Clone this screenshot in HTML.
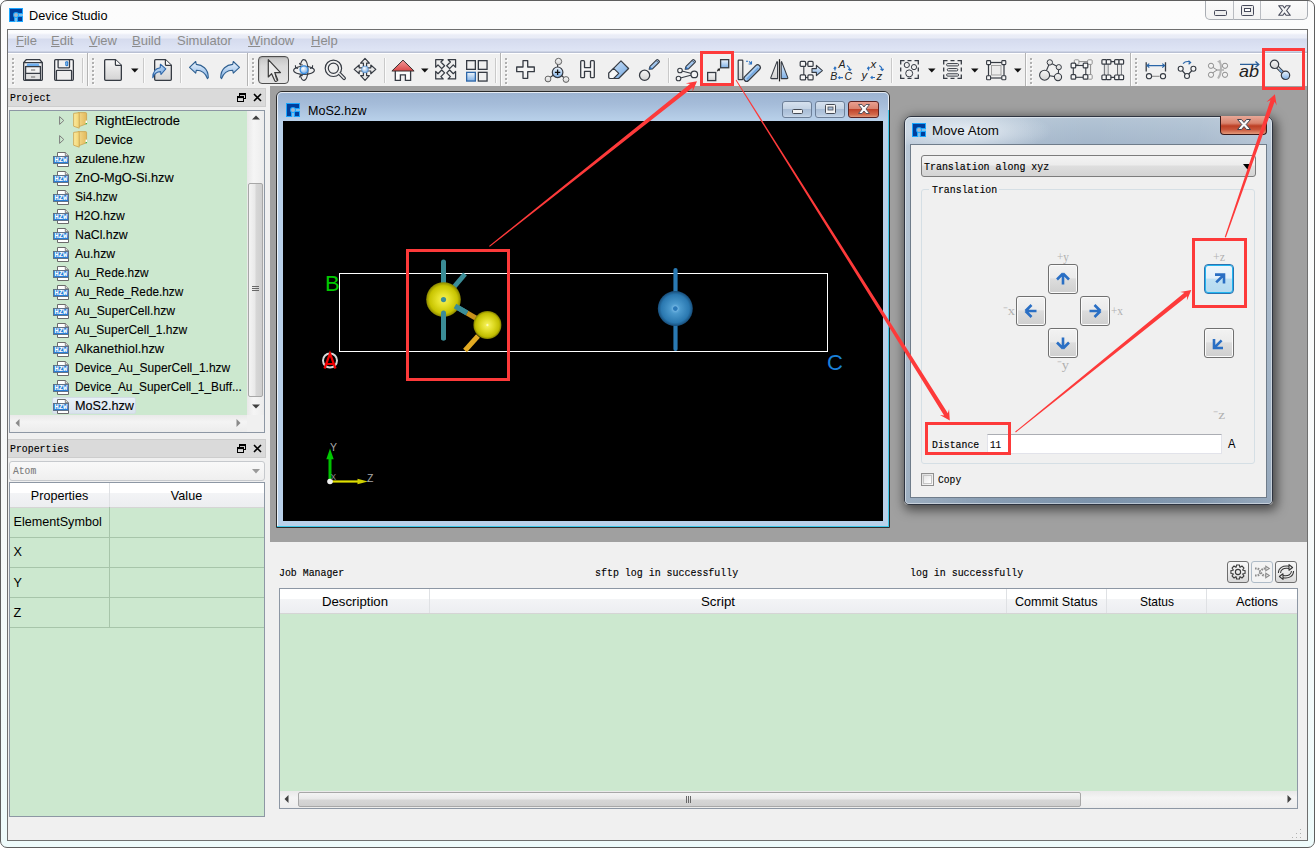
<!DOCTYPE html>
<html><head><meta charset="utf-8">
<style>
*{box-sizing:border-box;margin:0;padding:0}
html,body{width:1315px;height:848px;overflow:hidden;background:#fff}
body{position:relative;font-family:"Liberation Sans",sans-serif;font-size:13px;color:#000}
.a{position:absolute}
.t{white-space:pre}
svg{position:absolute;overflow:visible}
</style></head><body>
<div class="a" style="left:0px;top:0px;width:1315px;height:848px;border:1px solid #5e5e5e;border-radius:7px;background:linear-gradient(#fcfcfc,#f7f9f9 60%,#eefbfb)"></div>
<svg style="left:9px;top:8px;" width="14" height="14" viewBox="0 0 14 14"><rect x="0" y="0" width="14" height="14" fill="#1aa6ff"/><rect x="1" y="1" width="12" height="12" fill="#003f9c"/><rect x="7" y="5" width="7" height="4" fill="#1aa6ff"/><rect x="5" y="7" width="4" height="7" fill="#1aa6ff"/><rect x="8" y="6" width="6" height="2" fill="#80c0ea"/><rect x="6" y="8" width="2" height="6" fill="#80c0ea"/><circle cx="7" cy="7" r="3" fill="#1aa6ff"/><circle cx="7" cy="7" r="2" fill="#a6b8cc"/></svg>
<svg style="left:29.00px;top:4.30px" width="82.5" height="20.8"><text x="0" y="15.60" font-family="Liberation Sans" font-size="13" font-weight="normal" fill="#000" textLength="78.5" lengthAdjust="spacingAndGlyphs" style="white-space:pre">Device Studio</text></svg>
<div class="a" style="left:1205px;top:1px;width:103px;height:19px;border:1px solid #a9adb3;border-top:none;border-radius:0 0 5px 5px;background:linear-gradient(#fbfbfb,#f3f3f3)"></div>
<div class="a" style="left:1233px;top:1px;width:1px;height:19px;background:#b9bcc1"></div>
<div class="a" style="left:1260px;top:1px;width:1px;height:19px;background:#b9bcc1"></div>
<svg style="left:1214px;top:10px;" width="13" height="6" viewBox="0 0 13 6"><rect x="0.5" y="0.5" width="12" height="5" rx="1" fill="#eee" stroke="#474a5a"/></svg>
<svg style="left:1241px;top:5px;" width="13" height="11" viewBox="0 0 13 11"><rect x="0.5" y="0.5" width="12" height="10" rx="1" fill="#eee" stroke="#474a5a"/><rect x="3.5" y="3.5" width="6" height="3" fill="#fff" stroke="#474a5a"/></svg>
<svg style="left:1278px;top:5px;" width="13" height="11" viewBox="0 0 13 11"><path d="M0.7 0.7 H4.9 L6.5 3 L8.1 0.7 H12.3 L8.6 5.5 L12.3 10.3 H8.1 L6.5 8 L4.9 10.3 H0.7 L4.4 5.5 Z" fill="#f4f4f4" stroke="#474a5a" stroke-width="1.1" stroke-linejoin="round"/></svg>
<div class="a" style="left:7px;top:29px;width:1301px;height:812px;border:1px solid #6f6f6f;background:#f0f0f0"></div>
<div class="a" style="left:8px;top:30px;width:1299px;height:23px;background:linear-gradient(#fcfdfe 0px,#fbfcfe 3px,#eaedf7 5px,#e9ecf6 8px,#d5dbee 9px,#dfe5f5 21px,#b9c0d3 22px)"></div>
<div class="a" style="left:8px;top:53px;width:1299px;height:1px;background:#fff"></div>
<div class="a t" style="left:16px;top:32.00px;line-height:17px;font-family:'Liberation Sans';font-size:13px;color:#8c8c8c;"><u>F</u>ile</div>
<div class="a t" style="left:51px;top:32.00px;line-height:17px;font-family:'Liberation Sans';font-size:13px;color:#8c8c8c;"><u>E</u>dit</div>
<div class="a t" style="left:89px;top:32.00px;line-height:17px;font-family:'Liberation Sans';font-size:13px;color:#8c8c8c;"><u>V</u>iew</div>
<div class="a t" style="left:132px;top:32.00px;line-height:17px;font-family:'Liberation Sans';font-size:13px;color:#8c8c8c;"><u>B</u>uild</div>
<div class="a t" style="left:177px;top:32.00px;line-height:17px;font-family:'Liberation Sans';font-size:13px;color:#8c8c8c;">Simulator</div>
<div class="a t" style="left:248px;top:32.00px;line-height:17px;font-family:'Liberation Sans';font-size:13px;color:#8c8c8c;"><u>W</u>indow</div>
<div class="a t" style="left:311px;top:32.00px;line-height:17px;font-family:'Liberation Sans';font-size:13px;color:#8c8c8c;"><u>H</u>elp</div>
<div class="a" style="left:8px;top:54px;width:1299px;height:32px;background:#f0f0f0"></div>
<div class="a" style="left:8px;top:86px;width:262px;height:2px;background:#f0f0f0"></div>
<div class="a" style="left:87px;top:53px;width:1px;height:33px;background:#b4b4b4"></div>
<div class="a" style="left:88px;top:53px;width:1px;height:33px;background:#fdfdfd"></div>
<div class="a" style="left:247px;top:53px;width:1px;height:33px;background:#b4b4b4"></div>
<div class="a" style="left:248px;top:53px;width:1px;height:33px;background:#fdfdfd"></div>
<div class="a" style="left:500px;top:53px;width:1px;height:33px;background:#b4b4b4"></div>
<div class="a" style="left:501px;top:53px;width:1px;height:33px;background:#fdfdfd"></div>
<div class="a" style="left:1025px;top:53px;width:1px;height:33px;background:#b4b4b4"></div>
<div class="a" style="left:1026px;top:53px;width:1px;height:33px;background:#fdfdfd"></div>
<div class="a" style="left:1130px;top:53px;width:1px;height:33px;background:#b4b4b4"></div>
<div class="a" style="left:1131px;top:53px;width:1px;height:33px;background:#fdfdfd"></div>
<div class="a" style="left:12px;top:57.5px;width:2px;height:2px;background:#9a9a9a;border-radius:1px;box-shadow:1px 1px 0 #ffffff"></div>
<div class="a" style="left:12px;top:61.5px;width:2px;height:2px;background:#9a9a9a;border-radius:1px;box-shadow:1px 1px 0 #ffffff"></div>
<div class="a" style="left:12px;top:65.5px;width:2px;height:2px;background:#9a9a9a;border-radius:1px;box-shadow:1px 1px 0 #ffffff"></div>
<div class="a" style="left:12px;top:69.5px;width:2px;height:2px;background:#9a9a9a;border-radius:1px;box-shadow:1px 1px 0 #ffffff"></div>
<div class="a" style="left:12px;top:73.5px;width:2px;height:2px;background:#9a9a9a;border-radius:1px;box-shadow:1px 1px 0 #ffffff"></div>
<div class="a" style="left:12px;top:77.5px;width:2px;height:2px;background:#9a9a9a;border-radius:1px;box-shadow:1px 1px 0 #ffffff"></div>
<div class="a" style="left:12px;top:81.5px;width:2px;height:2px;background:#9a9a9a;border-radius:1px;box-shadow:1px 1px 0 #ffffff"></div>
<div class="a" style="left:92px;top:57.5px;width:2px;height:2px;background:#9a9a9a;border-radius:1px;box-shadow:1px 1px 0 #ffffff"></div>
<div class="a" style="left:92px;top:61.5px;width:2px;height:2px;background:#9a9a9a;border-radius:1px;box-shadow:1px 1px 0 #ffffff"></div>
<div class="a" style="left:92px;top:65.5px;width:2px;height:2px;background:#9a9a9a;border-radius:1px;box-shadow:1px 1px 0 #ffffff"></div>
<div class="a" style="left:92px;top:69.5px;width:2px;height:2px;background:#9a9a9a;border-radius:1px;box-shadow:1px 1px 0 #ffffff"></div>
<div class="a" style="left:92px;top:73.5px;width:2px;height:2px;background:#9a9a9a;border-radius:1px;box-shadow:1px 1px 0 #ffffff"></div>
<div class="a" style="left:92px;top:77.5px;width:2px;height:2px;background:#9a9a9a;border-radius:1px;box-shadow:1px 1px 0 #ffffff"></div>
<div class="a" style="left:92px;top:81.5px;width:2px;height:2px;background:#9a9a9a;border-radius:1px;box-shadow:1px 1px 0 #ffffff"></div>
<div class="a" style="left:252px;top:57.5px;width:2px;height:2px;background:#9a9a9a;border-radius:1px;box-shadow:1px 1px 0 #ffffff"></div>
<div class="a" style="left:252px;top:61.5px;width:2px;height:2px;background:#9a9a9a;border-radius:1px;box-shadow:1px 1px 0 #ffffff"></div>
<div class="a" style="left:252px;top:65.5px;width:2px;height:2px;background:#9a9a9a;border-radius:1px;box-shadow:1px 1px 0 #ffffff"></div>
<div class="a" style="left:252px;top:69.5px;width:2px;height:2px;background:#9a9a9a;border-radius:1px;box-shadow:1px 1px 0 #ffffff"></div>
<div class="a" style="left:252px;top:73.5px;width:2px;height:2px;background:#9a9a9a;border-radius:1px;box-shadow:1px 1px 0 #ffffff"></div>
<div class="a" style="left:252px;top:77.5px;width:2px;height:2px;background:#9a9a9a;border-radius:1px;box-shadow:1px 1px 0 #ffffff"></div>
<div class="a" style="left:252px;top:81.5px;width:2px;height:2px;background:#9a9a9a;border-radius:1px;box-shadow:1px 1px 0 #ffffff"></div>
<div class="a" style="left:505px;top:57.5px;width:2px;height:2px;background:#9a9a9a;border-radius:1px;box-shadow:1px 1px 0 #ffffff"></div>
<div class="a" style="left:505px;top:61.5px;width:2px;height:2px;background:#9a9a9a;border-radius:1px;box-shadow:1px 1px 0 #ffffff"></div>
<div class="a" style="left:505px;top:65.5px;width:2px;height:2px;background:#9a9a9a;border-radius:1px;box-shadow:1px 1px 0 #ffffff"></div>
<div class="a" style="left:505px;top:69.5px;width:2px;height:2px;background:#9a9a9a;border-radius:1px;box-shadow:1px 1px 0 #ffffff"></div>
<div class="a" style="left:505px;top:73.5px;width:2px;height:2px;background:#9a9a9a;border-radius:1px;box-shadow:1px 1px 0 #ffffff"></div>
<div class="a" style="left:505px;top:77.5px;width:2px;height:2px;background:#9a9a9a;border-radius:1px;box-shadow:1px 1px 0 #ffffff"></div>
<div class="a" style="left:505px;top:81.5px;width:2px;height:2px;background:#9a9a9a;border-radius:1px;box-shadow:1px 1px 0 #ffffff"></div>
<div class="a" style="left:1030px;top:57.5px;width:2px;height:2px;background:#9a9a9a;border-radius:1px;box-shadow:1px 1px 0 #ffffff"></div>
<div class="a" style="left:1030px;top:61.5px;width:2px;height:2px;background:#9a9a9a;border-radius:1px;box-shadow:1px 1px 0 #ffffff"></div>
<div class="a" style="left:1030px;top:65.5px;width:2px;height:2px;background:#9a9a9a;border-radius:1px;box-shadow:1px 1px 0 #ffffff"></div>
<div class="a" style="left:1030px;top:69.5px;width:2px;height:2px;background:#9a9a9a;border-radius:1px;box-shadow:1px 1px 0 #ffffff"></div>
<div class="a" style="left:1030px;top:73.5px;width:2px;height:2px;background:#9a9a9a;border-radius:1px;box-shadow:1px 1px 0 #ffffff"></div>
<div class="a" style="left:1030px;top:77.5px;width:2px;height:2px;background:#9a9a9a;border-radius:1px;box-shadow:1px 1px 0 #ffffff"></div>
<div class="a" style="left:1030px;top:81.5px;width:2px;height:2px;background:#9a9a9a;border-radius:1px;box-shadow:1px 1px 0 #ffffff"></div>
<div class="a" style="left:1135px;top:57.5px;width:2px;height:2px;background:#9a9a9a;border-radius:1px;box-shadow:1px 1px 0 #ffffff"></div>
<div class="a" style="left:1135px;top:61.5px;width:2px;height:2px;background:#9a9a9a;border-radius:1px;box-shadow:1px 1px 0 #ffffff"></div>
<div class="a" style="left:1135px;top:65.5px;width:2px;height:2px;background:#9a9a9a;border-radius:1px;box-shadow:1px 1px 0 #ffffff"></div>
<div class="a" style="left:1135px;top:69.5px;width:2px;height:2px;background:#9a9a9a;border-radius:1px;box-shadow:1px 1px 0 #ffffff"></div>
<div class="a" style="left:1135px;top:73.5px;width:2px;height:2px;background:#9a9a9a;border-radius:1px;box-shadow:1px 1px 0 #ffffff"></div>
<div class="a" style="left:1135px;top:77.5px;width:2px;height:2px;background:#9a9a9a;border-radius:1px;box-shadow:1px 1px 0 #ffffff"></div>
<div class="a" style="left:1135px;top:81.5px;width:2px;height:2px;background:#9a9a9a;border-radius:1px;box-shadow:1px 1px 0 #ffffff"></div>
<div class="a" style="left:82px;top:58px;width:1px;height:25px;background:#c9c9c9"></div>
<div class="a" style="left:83px;top:58px;width:1px;height:25px;background:#fbfbfb"></div>
<div class="a" style="left:143px;top:58px;width:1px;height:25px;background:#c9c9c9"></div>
<div class="a" style="left:144px;top:58px;width:1px;height:25px;background:#fbfbfb"></div>
<div class="a" style="left:180px;top:58px;width:1px;height:25px;background:#c9c9c9"></div>
<div class="a" style="left:181px;top:58px;width:1px;height:25px;background:#fbfbfb"></div>
<div class="a" style="left:384px;top:58px;width:1px;height:25px;background:#c9c9c9"></div>
<div class="a" style="left:385px;top:58px;width:1px;height:25px;background:#fbfbfb"></div>
<div class="a" style="left:495px;top:58px;width:1px;height:25px;background:#c9c9c9"></div>
<div class="a" style="left:496px;top:58px;width:1px;height:25px;background:#fbfbfb"></div>
<div class="a" style="left:668px;top:58px;width:1px;height:25px;background:#c9c9c9"></div>
<div class="a" style="left:669px;top:58px;width:1px;height:25px;background:#fbfbfb"></div>
<div class="a" style="left:891px;top:58px;width:1px;height:25px;background:#c9c9c9"></div>
<div class="a" style="left:892px;top:58px;width:1px;height:25px;background:#fbfbfb"></div>
<div class="a" style="left:270px;top:86px;width:1037px;height:456px;background:#a0a0a0"></div>
<div class="a" style="left:8px;top:88px;width:258px;height:19px;background:#dadada;border:1px solid #cdcdcd;border-left:none"></div>
<svg style="left:10.00px;top:87.34px" width="45.2" height="18.9"><text x="0" y="14.16" font-family="Liberation Mono" font-size="11.8" font-weight="normal" fill="#000" stroke="#000" stroke-width="0.15" textLength="41.2" lengthAdjust="spacingAndGlyphs" style="white-space:pre">Project</text></svg>
<svg style="left:237px;top:93px;" width="9" height="9" viewBox="0 0 9 9"><rect x="2.5" y="0.5" width="6" height="5" fill="none" stroke="#000" stroke-width="1"/><rect x="2.5" y="0.5" width="6" height="1.6" fill="#000"/><rect x="0.5" y="3.5" width="6" height="5" fill="#dadada" stroke="#000" stroke-width="1"/><rect x="0.5" y="3.5" width="6" height="1.6" fill="#000"/></svg>
<svg style="left:253px;top:93px;" width="9" height="9" viewBox="0 0 9 9"><path d="M1 1 L8 8 M8 1 L1 8" stroke="#000" stroke-width="1.6"/></svg>
<div class="a" style="left:9px;top:110px;width:256px;height:323px;border:1px solid #8d97a4;background:#cce8cf"></div>
<svg style="left:59px;top:115.89999999999999px;" width="6" height="10" viewBox="0 0 6 10"><path d="M0.6 0.6 L4.8 4.5 L0.6 8.4 Z" fill="none" stroke="#7c7c7c" stroke-width="1"/></svg>
<svg style="left:73px;top:111.5px;" width="15" height="17" viewBox="0 0 15 17"><defs><linearGradient id="ffront" x1="0" x2="1"><stop offset="0" stop-color="#fbea9e"/><stop offset="1" stop-color="#f1d474"/></linearGradient><linearGradient id="fback" x1="0" x2="1"><stop offset="0" stop-color="#f3d88a"/><stop offset="1" stop-color="#e2b95c"/></linearGradient></defs><path d="M5.5 0.6 H12.6 Q13.6 0.6 13.6 1.6 V11.8 L6 14.6 Z" fill="url(#fback)" stroke="#c9a24e" stroke-width="0.8"/><path d="M0.6 1.4 L6.2 0.6 V16.2 L0.6 14.2 Z" fill="url(#ffront)" stroke="#c9a24e" stroke-width="0.8"/><rect x="12.6" y="8.6" width="1.4" height="3" fill="#fff"/><rect x="12.6" y="11" width="1.4" height="1.2" fill="#3cb44a"/></svg>
<svg style="left:95.00px;top:109.62px" width="89.0" height="20.6"><text x="0" y="15.48" font-family="Liberation Sans" font-size="12.9" font-weight="normal" fill="#000" stroke="#000" stroke-width="0.1" textLength="85" lengthAdjust="spacingAndGlyphs" style="white-space:pre">RightElectrode</text></svg>
<svg style="left:59px;top:134.9px;" width="6" height="10" viewBox="0 0 6 10"><path d="M0.6 0.6 L4.8 4.5 L0.6 8.4 Z" fill="none" stroke="#7c7c7c" stroke-width="1"/></svg>
<svg style="left:73px;top:130.5px;" width="15" height="17" viewBox="0 0 15 17"><defs><linearGradient id="ffront" x1="0" x2="1"><stop offset="0" stop-color="#fbea9e"/><stop offset="1" stop-color="#f1d474"/></linearGradient><linearGradient id="fback" x1="0" x2="1"><stop offset="0" stop-color="#f3d88a"/><stop offset="1" stop-color="#e2b95c"/></linearGradient></defs><path d="M5.5 0.6 H12.6 Q13.6 0.6 13.6 1.6 V11.8 L6 14.6 Z" fill="url(#fback)" stroke="#c9a24e" stroke-width="0.8"/><path d="M0.6 1.4 L6.2 0.6 V16.2 L0.6 14.2 Z" fill="url(#ffront)" stroke="#c9a24e" stroke-width="0.8"/><rect x="12.6" y="8.6" width="1.4" height="3" fill="#fff"/><rect x="12.6" y="11" width="1.4" height="1.2" fill="#3cb44a"/></svg>
<svg style="left:95.00px;top:128.62px" width="42.0" height="20.6"><text x="0" y="15.48" font-family="Liberation Sans" font-size="12.9" font-weight="normal" fill="#000" stroke="#000" stroke-width="0.1" textLength="38" lengthAdjust="spacingAndGlyphs" style="white-space:pre">Device</text></svg>
<svg style="left:53px;top:152.1px;" width="16" height="15" viewBox="0 0 16 15"><path d="M4.5 0.5 H12.3 L15.5 3.7 V14.5 H4.5 Z" fill="#fff" stroke="#6b6b6b" stroke-width="1"/><path d="M12.3 0.5 V3.7 H15.5" fill="#ddd" stroke="#6b6b6b" stroke-width="0.8"/><rect x="0.5" y="4.5" width="15" height="7" fill="#2a7fd8" stroke="#5d6d80" stroke-width="0.9"/><text x="1.6" y="10.4" font-family="Liberation Mono" font-size="7.2" font-weight="bold" fill="#fff" textLength="12.8" lengthAdjust="spacingAndGlyphs">HZW</text></svg>
<svg style="left:75.00px;top:147.98px" width="73.4" height="20.2"><text x="0" y="15.12" font-family="Liberation Sans" font-size="12.6" font-weight="normal" fill="#000" stroke="#000" stroke-width="0.1" textLength="69.4" lengthAdjust="spacingAndGlyphs" style="white-space:pre">azulene.hzw</text></svg>
<svg style="left:53px;top:171.1px;" width="16" height="15" viewBox="0 0 16 15"><path d="M4.5 0.5 H12.3 L15.5 3.7 V14.5 H4.5 Z" fill="#fff" stroke="#6b6b6b" stroke-width="1"/><path d="M12.3 0.5 V3.7 H15.5" fill="#ddd" stroke="#6b6b6b" stroke-width="0.8"/><rect x="0.5" y="4.5" width="15" height="7" fill="#2a7fd8" stroke="#5d6d80" stroke-width="0.9"/><text x="1.6" y="10.4" font-family="Liberation Mono" font-size="7.2" font-weight="bold" fill="#fff" textLength="12.8" lengthAdjust="spacingAndGlyphs">HZW</text></svg>
<svg style="left:75.00px;top:166.98px" width="102.7" height="20.2"><text x="0" y="15.12" font-family="Liberation Sans" font-size="12.6" font-weight="normal" fill="#000" stroke="#000" stroke-width="0.1" textLength="98.69999999999999" lengthAdjust="spacingAndGlyphs" style="white-space:pre">ZnO-MgO-Si.hzw</text></svg>
<svg style="left:53px;top:190.1px;" width="16" height="15" viewBox="0 0 16 15"><path d="M4.5 0.5 H12.3 L15.5 3.7 V14.5 H4.5 Z" fill="#fff" stroke="#6b6b6b" stroke-width="1"/><path d="M12.3 0.5 V3.7 H15.5" fill="#ddd" stroke="#6b6b6b" stroke-width="0.8"/><rect x="0.5" y="4.5" width="15" height="7" fill="#2a7fd8" stroke="#5d6d80" stroke-width="0.9"/><text x="1.6" y="10.4" font-family="Liberation Mono" font-size="7.2" font-weight="bold" fill="#fff" textLength="12.8" lengthAdjust="spacingAndGlyphs">HZW</text></svg>
<svg style="left:75.00px;top:185.98px" width="46.2" height="20.2"><text x="0" y="15.12" font-family="Liberation Sans" font-size="12.6" font-weight="normal" fill="#000" stroke="#000" stroke-width="0.1" textLength="42.2" lengthAdjust="spacingAndGlyphs" style="white-space:pre">Si4.hzw</text></svg>
<svg style="left:53px;top:209.1px;" width="16" height="15" viewBox="0 0 16 15"><path d="M4.5 0.5 H12.3 L15.5 3.7 V14.5 H4.5 Z" fill="#fff" stroke="#6b6b6b" stroke-width="1"/><path d="M12.3 0.5 V3.7 H15.5" fill="#ddd" stroke="#6b6b6b" stroke-width="0.8"/><rect x="0.5" y="4.5" width="15" height="7" fill="#2a7fd8" stroke="#5d6d80" stroke-width="0.9"/><text x="1.6" y="10.4" font-family="Liberation Mono" font-size="7.2" font-weight="bold" fill="#fff" textLength="12.8" lengthAdjust="spacingAndGlyphs">HZW</text></svg>
<svg style="left:75.00px;top:204.98px" width="53.7" height="20.2"><text x="0" y="15.12" font-family="Liberation Sans" font-size="12.6" font-weight="normal" fill="#000" stroke="#000" stroke-width="0.1" textLength="49.7" lengthAdjust="spacingAndGlyphs" style="white-space:pre">H2O.hzw</text></svg>
<svg style="left:53px;top:228.1px;" width="16" height="15" viewBox="0 0 16 15"><path d="M4.5 0.5 H12.3 L15.5 3.7 V14.5 H4.5 Z" fill="#fff" stroke="#6b6b6b" stroke-width="1"/><path d="M12.3 0.5 V3.7 H15.5" fill="#ddd" stroke="#6b6b6b" stroke-width="0.8"/><rect x="0.5" y="4.5" width="15" height="7" fill="#2a7fd8" stroke="#5d6d80" stroke-width="0.9"/><text x="1.6" y="10.4" font-family="Liberation Mono" font-size="7.2" font-weight="bold" fill="#fff" textLength="12.8" lengthAdjust="spacingAndGlyphs">HZW</text></svg>
<svg style="left:75.00px;top:223.98px" width="56.7" height="20.2"><text x="0" y="15.12" font-family="Liberation Sans" font-size="12.6" font-weight="normal" fill="#000" stroke="#000" stroke-width="0.1" textLength="52.7" lengthAdjust="spacingAndGlyphs" style="white-space:pre">NaCl.hzw</text></svg>
<svg style="left:53px;top:247.10000000000002px;" width="16" height="15" viewBox="0 0 16 15"><path d="M4.5 0.5 H12.3 L15.5 3.7 V14.5 H4.5 Z" fill="#fff" stroke="#6b6b6b" stroke-width="1"/><path d="M12.3 0.5 V3.7 H15.5" fill="#ddd" stroke="#6b6b6b" stroke-width="0.8"/><rect x="0.5" y="4.5" width="15" height="7" fill="#2a7fd8" stroke="#5d6d80" stroke-width="0.9"/><text x="1.6" y="10.4" font-family="Liberation Mono" font-size="7.2" font-weight="bold" fill="#fff" textLength="12.8" lengthAdjust="spacingAndGlyphs">HZW</text></svg>
<svg style="left:75.00px;top:242.98px" width="44.1" height="20.2"><text x="0" y="15.12" font-family="Liberation Sans" font-size="12.6" font-weight="normal" fill="#000" stroke="#000" stroke-width="0.1" textLength="40.099999999999994" lengthAdjust="spacingAndGlyphs" style="white-space:pre">Au.hzw</text></svg>
<svg style="left:53px;top:266.1px;" width="16" height="15" viewBox="0 0 16 15"><path d="M4.5 0.5 H12.3 L15.5 3.7 V14.5 H4.5 Z" fill="#fff" stroke="#6b6b6b" stroke-width="1"/><path d="M12.3 0.5 V3.7 H15.5" fill="#ddd" stroke="#6b6b6b" stroke-width="0.8"/><rect x="0.5" y="4.5" width="15" height="7" fill="#2a7fd8" stroke="#5d6d80" stroke-width="0.9"/><text x="1.6" y="10.4" font-family="Liberation Mono" font-size="7.2" font-weight="bold" fill="#fff" textLength="12.8" lengthAdjust="spacingAndGlyphs">HZW</text></svg>
<svg style="left:75.00px;top:261.98px" width="77.6" height="20.2"><text x="0" y="15.12" font-family="Liberation Sans" font-size="12.6" font-weight="normal" fill="#000" stroke="#000" stroke-width="0.1" textLength="73.6" lengthAdjust="spacingAndGlyphs" style="white-space:pre">Au_Rede.hzw</text></svg>
<svg style="left:53px;top:285.1px;" width="16" height="15" viewBox="0 0 16 15"><path d="M4.5 0.5 H12.3 L15.5 3.7 V14.5 H4.5 Z" fill="#fff" stroke="#6b6b6b" stroke-width="1"/><path d="M12.3 0.5 V3.7 H15.5" fill="#ddd" stroke="#6b6b6b" stroke-width="0.8"/><rect x="0.5" y="4.5" width="15" height="7" fill="#2a7fd8" stroke="#5d6d80" stroke-width="0.9"/><text x="1.6" y="10.4" font-family="Liberation Mono" font-size="7.2" font-weight="bold" fill="#fff" textLength="12.8" lengthAdjust="spacingAndGlyphs">HZW</text></svg>
<svg style="left:75.00px;top:280.98px" width="112.3" height="20.2"><text x="0" y="15.12" font-family="Liberation Sans" font-size="12.6" font-weight="normal" fill="#000" stroke="#000" stroke-width="0.1" textLength="108.30000000000001" lengthAdjust="spacingAndGlyphs" style="white-space:pre">Au_Rede_Rede.hzw</text></svg>
<svg style="left:53px;top:304.1px;" width="16" height="15" viewBox="0 0 16 15"><path d="M4.5 0.5 H12.3 L15.5 3.7 V14.5 H4.5 Z" fill="#fff" stroke="#6b6b6b" stroke-width="1"/><path d="M12.3 0.5 V3.7 H15.5" fill="#ddd" stroke="#6b6b6b" stroke-width="0.8"/><rect x="0.5" y="4.5" width="15" height="7" fill="#2a7fd8" stroke="#5d6d80" stroke-width="0.9"/><text x="1.6" y="10.4" font-family="Liberation Mono" font-size="7.2" font-weight="bold" fill="#fff" textLength="12.8" lengthAdjust="spacingAndGlyphs">HZW</text></svg>
<svg style="left:75.00px;top:299.98px" width="104.0" height="20.2"><text x="0" y="15.12" font-family="Liberation Sans" font-size="12.6" font-weight="normal" fill="#000" stroke="#000" stroke-width="0.1" textLength="100" lengthAdjust="spacingAndGlyphs" style="white-space:pre">Au_SuperCell.hzw</text></svg>
<svg style="left:53px;top:323.1px;" width="16" height="15" viewBox="0 0 16 15"><path d="M4.5 0.5 H12.3 L15.5 3.7 V14.5 H4.5 Z" fill="#fff" stroke="#6b6b6b" stroke-width="1"/><path d="M12.3 0.5 V3.7 H15.5" fill="#ddd" stroke="#6b6b6b" stroke-width="0.8"/><rect x="0.5" y="4.5" width="15" height="7" fill="#2a7fd8" stroke="#5d6d80" stroke-width="0.9"/><text x="1.6" y="10.4" font-family="Liberation Mono" font-size="7.2" font-weight="bold" fill="#fff" textLength="12.8" lengthAdjust="spacingAndGlyphs">HZW</text></svg>
<svg style="left:75.00px;top:318.98px" width="116.1" height="20.2"><text x="0" y="15.12" font-family="Liberation Sans" font-size="12.6" font-weight="normal" fill="#000" stroke="#000" stroke-width="0.1" textLength="112.1" lengthAdjust="spacingAndGlyphs" style="white-space:pre">Au_SuperCell_1.hzw</text></svg>
<svg style="left:53px;top:342.1px;" width="16" height="15" viewBox="0 0 16 15"><path d="M4.5 0.5 H12.3 L15.5 3.7 V14.5 H4.5 Z" fill="#fff" stroke="#6b6b6b" stroke-width="1"/><path d="M12.3 0.5 V3.7 H15.5" fill="#ddd" stroke="#6b6b6b" stroke-width="0.8"/><rect x="0.5" y="4.5" width="15" height="7" fill="#2a7fd8" stroke="#5d6d80" stroke-width="0.9"/><text x="1.6" y="10.4" font-family="Liberation Mono" font-size="7.2" font-weight="bold" fill="#fff" textLength="12.8" lengthAdjust="spacingAndGlyphs">HZW</text></svg>
<svg style="left:75.00px;top:337.98px" width="93.1" height="20.2"><text x="0" y="15.12" font-family="Liberation Sans" font-size="12.6" font-weight="normal" fill="#000" stroke="#000" stroke-width="0.1" textLength="89.1" lengthAdjust="spacingAndGlyphs" style="white-space:pre">Alkanethiol.hzw</text></svg>
<svg style="left:53px;top:361.1px;" width="16" height="15" viewBox="0 0 16 15"><path d="M4.5 0.5 H12.3 L15.5 3.7 V14.5 H4.5 Z" fill="#fff" stroke="#6b6b6b" stroke-width="1"/><path d="M12.3 0.5 V3.7 H15.5" fill="#ddd" stroke="#6b6b6b" stroke-width="0.8"/><rect x="0.5" y="4.5" width="15" height="7" fill="#2a7fd8" stroke="#5d6d80" stroke-width="0.9"/><text x="1.6" y="10.4" font-family="Liberation Mono" font-size="7.2" font-weight="bold" fill="#fff" textLength="12.8" lengthAdjust="spacingAndGlyphs">HZW</text></svg>
<svg style="left:75.00px;top:356.98px" width="159.2" height="20.2"><text x="0" y="15.12" font-family="Liberation Sans" font-size="12.6" font-weight="normal" fill="#000" stroke="#000" stroke-width="0.1" textLength="155.2" lengthAdjust="spacingAndGlyphs" style="white-space:pre">Device_Au_SuperCell_1.hzw</text></svg>
<svg style="left:53px;top:380.1px;" width="16" height="15" viewBox="0 0 16 15"><path d="M4.5 0.5 H12.3 L15.5 3.7 V14.5 H4.5 Z" fill="#fff" stroke="#6b6b6b" stroke-width="1"/><path d="M12.3 0.5 V3.7 H15.5" fill="#ddd" stroke="#6b6b6b" stroke-width="0.8"/><rect x="0.5" y="4.5" width="15" height="7" fill="#2a7fd8" stroke="#5d6d80" stroke-width="0.9"/><text x="1.6" y="10.4" font-family="Liberation Mono" font-size="7.2" font-weight="bold" fill="#fff" textLength="12.8" lengthAdjust="spacingAndGlyphs">HZW</text></svg>
<svg style="left:75.00px;top:375.98px" width="170.9" height="20.2"><text x="0" y="15.12" font-family="Liberation Sans" font-size="12.6" font-weight="normal" fill="#000" stroke="#000" stroke-width="0.1" textLength="166.9" lengthAdjust="spacingAndGlyphs" style="white-space:pre">Device_Au_SuperCell_1_Buff...</text></svg>
<div class="a" style="left:52px;top:396.6px;width:84px;height:17px;background:linear-gradient(#e9f1f8,#d9e3ec);border:1px solid #d3dce6;border-radius:2px"></div>
<svg style="left:53px;top:399.1px;" width="16" height="15" viewBox="0 0 16 15"><path d="M4.5 0.5 H12.3 L15.5 3.7 V14.5 H4.5 Z" fill="#fff" stroke="#6b6b6b" stroke-width="1"/><path d="M12.3 0.5 V3.7 H15.5" fill="#ddd" stroke="#6b6b6b" stroke-width="0.8"/><rect x="0.5" y="4.5" width="15" height="7" fill="#2a7fd8" stroke="#5d6d80" stroke-width="0.9"/><text x="1.6" y="10.4" font-family="Liberation Mono" font-size="7.2" font-weight="bold" fill="#fff" textLength="12.8" lengthAdjust="spacingAndGlyphs">HZW</text></svg>
<svg style="left:75.00px;top:394.98px" width="63.0" height="20.2"><text x="0" y="15.12" font-family="Liberation Sans" font-size="12.6" font-weight="normal" fill="#000" stroke="#000" stroke-width="0.1" textLength="59" lengthAdjust="spacingAndGlyphs" style="white-space:pre">MoS2.hzw</text></svg>
<div class="a" style="left:247px;top:111px;width:17px;height:304px;background:linear-gradient(90deg,#e8e8e8,#f5f5f5 40%,#ececec)"></div>
<div class="a" style="left:248px;top:183px;width:15px;height:214px;border:1px solid #a7a7a7;border-radius:2px;background:linear-gradient(90deg,#f4f4f4,#e9e9e9 45%,#d6d6d6 55%,#cfcfcf)"></div>
<div class="a" style="left:252px;top:286px;width:7px;height:1px;background:#686868"></div>
<div class="a" style="left:252px;top:288px;width:7px;height:1px;background:#686868"></div>
<div class="a" style="left:252px;top:290px;width:7px;height:1px;background:#686868"></div>
<svg style="left:252px;top:115px;" width="8" height="5" viewBox="0 0 8 5"><path d="M0 4.5 L4 0.5 L8 4.5 Z" fill="#3f3f3f"/></svg>
<svg style="left:252px;top:404px;" width="8" height="5" viewBox="0 0 8 5"><path d="M0 0.5 L4 4.5 L8 0.5 Z" fill="#3f3f3f"/></svg>
<div class="a" style="left:10px;top:415px;width:237px;height:17px;background:linear-gradient(#e9e9e9,#f4f4f4 40%,#ececec)"></div>
<div class="a" style="left:247px;top:415px;width:17px;height:17px;background:#f0f0f0"></div>
<svg style="left:15px;top:419px;" width="5" height="8" viewBox="0 0 5 8"><path d="M4.5 0 L0.5 4 L4.5 8 Z" fill="#8a8a8a"/></svg>
<svg style="left:236px;top:419px;" width="5" height="8" viewBox="0 0 5 8"><path d="M0.5 0 L4.5 4 L0.5 8 Z" fill="#8a8a8a"/></svg>
<div class="a" style="left:8px;top:439px;width:258px;height:19px;background:#dadada;border:1px solid #cdcdcd;border-left:none"></div>
<svg style="left:10.00px;top:438.34px" width="63.2" height="18.9"><text x="0" y="14.16" font-family="Liberation Mono" font-size="11.8" font-weight="normal" fill="#000" stroke="#000" stroke-width="0.15" textLength="59.2" lengthAdjust="spacingAndGlyphs" style="white-space:pre">Properties</text></svg>
<svg style="left:237px;top:444px;" width="9" height="9" viewBox="0 0 9 9"><rect x="2.5" y="0.5" width="6" height="5" fill="none" stroke="#000" stroke-width="1"/><rect x="2.5" y="0.5" width="6" height="1.6" fill="#000"/><rect x="0.5" y="3.5" width="6" height="5" fill="#dadada" stroke="#000" stroke-width="1"/><rect x="0.5" y="3.5" width="6" height="1.6" fill="#000"/></svg>
<svg style="left:253px;top:444px;" width="9" height="9" viewBox="0 0 9 9"><path d="M1 1 L8 8 M8 1 L1 8" stroke="#000" stroke-width="1.6"/></svg>
<div class="a" style="left:9px;top:461px;width:256px;height:20px;border:1px solid #c6c9cd;border-radius:3px;background:linear-gradient(#f9f9f9,#efefef)"></div>
<svg style="left:13.00px;top:460.34px" width="27.2" height="18.9"><text x="0" y="14.16" font-family="Liberation Mono" font-size="11.8" font-weight="normal" fill="#7d7d7d" stroke="#7d7d7d" stroke-width="0.15" textLength="23.2" lengthAdjust="spacingAndGlyphs" style="white-space:pre">Atom</text></svg>
<svg style="left:252px;top:469px;" width="8" height="5" viewBox="0 0 8 5"><path d="M0 0 L8 0 L4 4.5 Z" fill="#9a9a9a"/></svg>
<div class="a" style="left:9px;top:482px;width:256px;height:335px;border:1px solid #8d97a4;background:#cce8cf"></div>
<div class="a" style="left:10px;top:483px;width:254px;height:25px;background:linear-gradient(#ffffff,#ffffff 40%,#f3f4f6 41%,#eceef1);border-bottom:1px solid #d5d5d5"></div>
<div class="a" style="left:109px;top:483px;width:1px;height:24px;background:#dfe1e4"></div>
<div class="a t" style="left:-240.5px;width:600px;text-align:center;top:487.63px;line-height:17px;font-family:'Liberation Sans';font-size:12.6px;color:#000;">Properties</div>
<div class="a t" style="left:-113.5px;width:600px;text-align:center;top:487.63px;line-height:17px;font-family:'Liberation Sans';font-size:12.6px;color:#000;">Value</div>
<div class="a" style="left:10px;top:537px;width:254px;height:1px;background:#a7c5aa"></div>
<div class="a" style="left:10px;top:567px;width:254px;height:1px;background:#a7c5aa"></div>
<div class="a" style="left:10px;top:597px;width:254px;height:1px;background:#a7c5aa"></div>
<div class="a" style="left:10px;top:627px;width:254px;height:1px;background:#a7c5aa"></div>
<div class="a" style="left:109px;top:507px;width:1px;height:121px;background:#a7c5aa"></div>
<div class="a t" style="left:13.5px;top:514.13px;line-height:17px;font-family:'Liberation Sans';font-size:12.6px;color:#000;">ElementSymbol</div>
<div class="a t" style="left:13.5px;top:544.13px;line-height:17px;font-family:'Liberation Sans';font-size:12.6px;color:#000;">X</div>
<div class="a t" style="left:13.5px;top:575.13px;line-height:17px;font-family:'Liberation Sans';font-size:12.6px;color:#000;">Y</div>
<div class="a t" style="left:13.5px;top:605.13px;line-height:17px;font-family:'Liberation Sans';font-size:12.6px;color:#000;">Z</div>
<div class="a" style="left:276px;top:91px;width:614px;height:437px;border:1px solid #2b2b2b;border-radius:6px 6px 0 0;background:linear-gradient(#9cb3d1 0px,#a5bcd9 12px,#b9d1ea 29px,#b9d1ea 100%)"></div>
<div class="a" style="left:277px;top:92px;width:612px;height:435px;border:1px solid rgba(255,255,255,0.75);border-bottom:none;border-radius:5px 5px 0 0"></div>
<div class="a" style="left:277px;top:526px;width:612px;height:1px;background:#3dc8e8"></div>
<div class="a" style="left:888px;top:110px;width:1px;height:417px;background:#3dc8e8"></div>
<svg style="left:286px;top:103px;" width="14" height="14" viewBox="0 0 14 14"><rect x="0" y="0" width="14" height="14" fill="#1aa6ff"/><rect x="1" y="1" width="12" height="12" fill="#003f9c"/><rect x="7" y="5" width="7" height="4" fill="#1aa6ff"/><rect x="5" y="7" width="4" height="7" fill="#1aa6ff"/><rect x="8" y="6" width="6" height="2" fill="#80c0ea"/><rect x="6" y="8" width="2" height="6" fill="#80c0ea"/><circle cx="7" cy="7" r="3" fill="#1aa6ff"/><circle cx="7" cy="7" r="2" fill="#a6b8cc"/></svg>
<svg style="left:307.50px;top:100.24px" width="62.5" height="20.5"><text x="0" y="15.36" font-family="Liberation Sans" font-size="12.8" font-weight="normal" fill="#000" textLength="58.5" lengthAdjust="spacingAndGlyphs" style="white-space:pre">MoS2.hzw</text></svg>
<div class="a" style="left:782px;top:101px;width:30px;height:17px;border:1px solid #6c7f98;border-radius:3px;background:linear-gradient(#d6e1ee,#c4d3e4 45%,#a9bdd6 50%,#b6c9df 85%,#cbd9ea)"></div>
<svg style="left:792.0px;top:109px;" width="11" height="5" viewBox="0 0 11 5"><rect x="0.5" y="0.5" width="10" height="4" rx="1" fill="#f4f4f4" stroke="#444a55"/></svg>
<div class="a" style="left:815px;top:101px;width:30px;height:17px;border:1px solid #6c7f98;border-radius:3px;background:linear-gradient(#d6e1ee,#c4d3e4 45%,#a9bdd6 50%,#b6c9df 85%,#cbd9ea)"></div>
<svg style="left:825.0px;top:104px;" width="11" height="10" viewBox="0 0 11 10"><rect x="0.5" y="0.5" width="10" height="9" rx="1" fill="#f4f4f4" stroke="#444a55"/><rect x="3" y="3" width="5" height="3" fill="#a9bfd9" stroke="#444a55" stroke-width="0.8"/></svg>
<div class="a" style="left:848px;top:101px;width:31px;height:17px;border:1px solid #5a2323;border-radius:3px;background:linear-gradient(#eaa090,#d9836f 45%,#c0432a 50%,#d26a4c 85%,#e09a7c)"></div>
<svg style="left:856.5px;top:103px;" width="14" height="12" viewBox="0 0 14 12"><path d="M1.5 1.5 L5 1.5 L7 4 L9 1.5 L12.5 1.5 L9 6 L12.5 10.5 L9 10.5 L7 8 L5 10.5 L1.5 10.5 L5 6 Z" fill="#fafafa" stroke="#4a4a55" stroke-width="0.9" stroke-linejoin="round"/></svg>
<div class="a" style="left:283px;top:121px;width:600px;height:400px;background:#000"></div>
<svg style="left:0px;top:0px;" width="1315" height="848" viewBox="0 0 1315 848">
<defs>
<radialGradient id="ys" cx="0.5" cy="0.5" r="0.5"><stop offset="0" stop-color="#f4f060"/><stop offset="0.35" stop-color="#e6e22a"/><stop offset="0.8" stop-color="#c8c400"/><stop offset="1" stop-color="#8a8600"/></radialGradient>
<radialGradient id="ys2" cx="0.5" cy="0.5" r="0.5"><stop offset="0" stop-color="#ffffe0"/><stop offset="0.12" stop-color="#f2ee50"/><stop offset="0.5" stop-color="#dcd820"/><stop offset="0.85" stop-color="#c0bc00"/><stop offset="1" stop-color="#807c00"/></radialGradient>
<radialGradient id="bs" cx="0.5" cy="0.5" r="0.5"><stop offset="0" stop-color="#7cc0ec"/><stop offset="0.3" stop-color="#4a98cc"/><stop offset="0.8" stop-color="#2a78b0"/><stop offset="1" stop-color="#174c78"/></radialGradient>
</defs>
<rect x="339.5" y="273.5" width="488" height="78" fill="none" stroke="#fff" stroke-width="1"/>
<text x="325" y="291.3" font-family="Liberation Sans" font-size="22" fill="#00c800">B</text>
<text x="827" y="369.5" font-family="Liberation Sans" font-size="22" fill="#1a80d8">C</text>
<circle cx="330" cy="360.5" r="7" fill="none" stroke="#d8d8d8" stroke-width="2"/>
<path d="M324.5 368.5 L330 353.5 L335.5 368.5 M326.8 364 H333.2" stroke="#f00000" stroke-width="2.2" fill="none"/>
<!-- sticks big atom -->
<line x1="443.5" y1="262" x2="443.5" y2="286" stroke="#3b8d97" stroke-width="5" stroke-linecap="round"/>
<line x1="443.5" y1="313" x2="443.5" y2="338" stroke="#3b8d97" stroke-width="5" stroke-linecap="round"/>
<line x1="454" y1="287" x2="465" y2="274" stroke="#3b8d97" stroke-width="5"/>
<line x1="455" y1="306" x2="467" y2="313" stroke="#3b8d97" stroke-width="5"/>
<line x1="467" y1="313" x2="480" y2="320.5" stroke="#c8921c" stroke-width="5"/>
<line x1="478" y1="336" x2="465" y2="350.5" stroke="#e2aa22" stroke-width="5"/>
<circle cx="443.5" cy="299.6" r="17.3" fill="url(#ys)"/>
<line x1="443.5" y1="313" x2="443.5" y2="338" stroke="#3b8d97" stroke-width="5" stroke-linecap="round"/>
<circle cx="443.5" cy="299.6" r="2.6" fill="#3b8d97"/>
<line x1="455" y1="306" x2="467" y2="313" stroke="#3b8d97" stroke-width="5"/>
<circle cx="487.4" cy="325" r="14" fill="url(#ys2)"/>
<!-- blue atom -->
<line x1="675.5" y1="270" x2="675.5" y2="349" stroke="#2a7ab4" stroke-width="4.2" stroke-linecap="round"/>
<circle cx="675.3" cy="308.6" r="17.5" fill="url(#bs)"/>
<circle cx="675.3" cy="308.6" r="2.8" fill="#2a78b8" stroke="#8ccaf0" stroke-width="0.6"/>
<!-- axes -->
<line x1="330" y1="481" x2="330" y2="458" stroke="#00c000" stroke-width="3"/>
<path d="M326.3 459.2 L330 448.6 L333.7 459.2 Z" fill="#00c800"/>
<line x1="330" y1="481.5" x2="358" y2="481.5" stroke="#e0e000" stroke-width="2.2"/>
<path d="M357.5 478.8 L368 481.5 L357.5 484.2 Z" fill="#d0d000"/>
<circle cx="330" cy="481.5" r="2.8" fill="#f0f0f0"/>
<text x="330" y="451" font-family="Liberation Sans" font-size="10.5" fill="#a8a8a8">Y</text>
<text x="330.5" y="480.3" font-family="Liberation Sans" font-size="8.5" fill="#8a8a8a">X</text>
<text x="367" y="482" font-family="Liberation Sans" font-size="10.5" fill="#a8a8a8">Z</text>
</svg>
<div class="a" style="left:904px;top:116px;width:369px;height:389px;border-radius:7px 7px 4px 4px;box-shadow:2px 3px 11px 2px rgba(0,0,0,0.55)"></div>
<div class="a" style="left:904px;top:116px;width:369px;height:389px;border:1px solid #2e3440;border-radius:7px 7px 5px 5px;background:linear-gradient(90deg,rgba(255,255,255,0.25) 0%,rgba(255,255,255,0.1) 20%,rgba(255,255,255,0) 50%,rgba(255,255,255,0.05) 80%,rgba(255,255,255,0.2) 100%),linear-gradient(#b3c4d5 0%,#a2b5c9 8%,#96abc0 40%,#8aa0b7 75%,#7c93ab 100%)"></div>
<div class="a" style="left:905px;top:117px;width:367px;height:28px;border-radius:6px 6px 0 0;background:radial-gradient(ellipse 85px 22px at 62px 14px,rgba(236,242,248,0.9),rgba(236,242,248,0) 100%)"></div>
<div class="a" style="left:905px;top:117px;width:367px;height:387px;border:1px solid rgba(255,255,255,0.45);border-radius:6px 6px 3px 3px"></div>
<svg style="left:912px;top:123px;" width="14" height="14" viewBox="0 0 14 14"><rect x="0" y="0" width="14" height="14" fill="#1aa6ff"/><rect x="1" y="1" width="12" height="12" fill="#003f9c"/><rect x="7" y="5" width="7" height="4" fill="#1aa6ff"/><rect x="5" y="7" width="4" height="7" fill="#1aa6ff"/><rect x="8" y="6" width="6" height="2" fill="#80c0ea"/><rect x="6" y="8" width="2" height="6" fill="#80c0ea"/><circle cx="7" cy="7" r="3" fill="#1aa6ff"/><circle cx="7" cy="7" r="2" fill="#a6b8cc"/></svg>
<svg style="left:932.00px;top:118.66px" width="71.0" height="21.1"><text x="0" y="15.84" font-family="Liberation Sans" font-size="13.2" font-weight="normal" fill="#0a0a0a" textLength="67" lengthAdjust="spacingAndGlyphs" style="white-space:pre">Move Atom</text></svg>
<div class="a" style="left:1220px;top:116px;width:47px;height:19px;border:1px solid #3c1a1a;border-top:none;border-radius:0 0 4px 4px;background:linear-gradient(#e8a898,#d9826c 40%,#bd3f24 55%,#c8553a 75%,#e39a7a)"></div>
<svg style="left:1236px;top:118px;" width="16" height="13" viewBox="0 0 16 13"><path d="M1.5 1.5 L5.5 1.5 L8 4.5 L10.5 1.5 L14.5 1.5 L10.2 6.5 L14.5 11.5 L10.5 11.5 L8 8.5 L5.5 11.5 L1.5 11.5 L5.8 6.5 Z" fill="#fafafa" stroke="#3e4250" stroke-width="1" stroke-linejoin="round"/></svg>
<div class="a" style="left:910px;top:144px;width:357px;height:354px;border:1px solid #6f7c8a;background:#f0f0f0"></div>
<div class="a" style="left:921px;top:155px;width:335px;height:22px;border:1px solid #7c7c7c;border-radius:3px;background:linear-gradient(#f3f3f3,#ececec 45%,#dedede 50%,#d4d4d4)"></div>
<svg style="left:924.00px;top:156.34px" width="129.2" height="18.9"><text x="0" y="14.16" font-family="Liberation Mono" font-size="11.8" font-weight="normal" fill="#000" stroke="#000" stroke-width="0.15" textLength="125.2" lengthAdjust="spacingAndGlyphs" style="white-space:pre">Translation along xyz</text></svg>
<svg style="left:1243px;top:164px;" width="9" height="6" viewBox="0 0 9 6"><path d="M0 0 H9 L4.5 5.5 Z" fill="#000"/></svg>
<div class="a" style="left:921px;top:189px;width:334px;height:275px;border:1px solid #d5dfe5;border-radius:3px"></div>
<div class="a" style="left:929px;top:183px;width:70px;height:12px;background:#f0f0f0"></div>
<svg style="left:932.00px;top:179.34px" width="69.2" height="18.9"><text x="0" y="14.16" font-family="Liberation Mono" font-size="11.8" font-weight="normal" fill="#000" stroke="#000" stroke-width="0.15" textLength="65.2" lengthAdjust="spacingAndGlyphs" style="white-space:pre">Translation</text></svg>
<div class="a" style="left:1048px;top:264px;width:30px;height:30px;border:1px solid #707070;border-radius:3px;background:linear-gradient(#f2f2f2,#ebebeb 45%,#dddddd 50%,#cfcfcf);box-shadow:inset 0 0 0 1px #fbfbfb"></div>
<svg style="left:1048px;top:264px;" width="30" height="30" viewBox="0 0 30 30"><path d="M15 9.5 L9 15.5 M15 9.5 L21 15.5 M15 10 V20.5" stroke="#2a6fc4" stroke-width="2.6" fill="none" stroke-linecap="butt" stroke-linejoin="miter"/></svg>
<div class="a" style="left:1016px;top:296px;width:30px;height:30px;border:1px solid #707070;border-radius:3px;background:linear-gradient(#f2f2f2,#ebebeb 45%,#dddddd 50%,#cfcfcf);box-shadow:inset 0 0 0 1px #fbfbfb"></div>
<svg style="left:1016px;top:296px;" width="30" height="30" viewBox="0 0 30 30"><path d="M9.5 15 L15.5 9 M9.5 15 L15.5 21 M10 15 H20.5" stroke="#2a6fc4" stroke-width="2.6" fill="none" stroke-linecap="butt" stroke-linejoin="miter"/></svg>
<div class="a" style="left:1080px;top:296px;width:30px;height:30px;border:1px solid #707070;border-radius:3px;background:linear-gradient(#f2f2f2,#ebebeb 45%,#dddddd 50%,#cfcfcf);box-shadow:inset 0 0 0 1px #fbfbfb"></div>
<svg style="left:1080px;top:296px;" width="30" height="30" viewBox="0 0 30 30"><path d="M20.5 15 L14.5 9 M20.5 15 L14.5 21 M20 15 H9.5" stroke="#2a6fc4" stroke-width="2.6" fill="none" stroke-linecap="butt" stroke-linejoin="miter"/></svg>
<div class="a" style="left:1048px;top:328px;width:30px;height:30px;border:1px solid #707070;border-radius:3px;background:linear-gradient(#f2f2f2,#ebebeb 45%,#dddddd 50%,#cfcfcf);box-shadow:inset 0 0 0 1px #fbfbfb"></div>
<svg style="left:1048px;top:328px;" width="30" height="30" viewBox="0 0 30 30"><path d="M15 20.5 L9 14.5 M15 20.5 L21 14.5 M15 20 V9.5" stroke="#2a6fc4" stroke-width="2.6" fill="none" stroke-linecap="butt" stroke-linejoin="miter"/></svg>
<div class="a" style="left:1204px;top:264px;width:30px;height:30px;border:1px solid #2c72b0;border-radius:4px;background:linear-gradient(#eef6fc,#e2f0fa 47%,#bfe0f3 50%,#b4daf0);box-shadow:inset 0 0 0 1px #22b6f0"></div>
<svg style="left:1204px;top:264px;" width="30" height="30" viewBox="0 0 30 30"><path d="M11 10.6 H20 V19.6 M19.6 11 L12.2 18.4" stroke="#2a6fc4" stroke-width="2.6" fill="none" stroke-linecap="butt" stroke-linejoin="miter"/></svg>
<div class="a" style="left:1204px;top:328px;width:30px;height:30px;border:1px solid #707070;border-radius:3px;background:linear-gradient(#f2f2f2,#ebebeb 45%,#dddddd 50%,#cfcfcf);box-shadow:inset 0 0 0 1px #fbfbfb"></div>
<svg style="left:1204px;top:328px;" width="30" height="30" viewBox="0 0 30 30"><path d="M10 11 V20 H19 M10.4 19.6 L17.6 12.4" stroke="#2a6fc4" stroke-width="2.6" fill="none" stroke-linecap="butt" stroke-linejoin="miter"/></svg>
<svg style="left:1057.00px;top:247.10px" width="16.0" height="19.2"><text x="0" y="14.40" font-family="Liberation Serif" font-size="12" font-weight="normal" fill="#b0b0b0" textLength="12" lengthAdjust="spacingAndGlyphs" style="white-space:pre">+y</text></svg>
<svg style="left:1002.50px;top:300.60px" width="16.0" height="19.2"><text x="0" y="14.40" font-family="Liberation Serif" font-size="12" font-weight="normal" fill="#b0b0b0" textLength="12" lengthAdjust="spacingAndGlyphs" style="white-space:pre">&#8315;x</text></svg>
<svg style="left:1111.00px;top:300.60px" width="16.0" height="19.2"><text x="0" y="14.40" font-family="Liberation Serif" font-size="12" font-weight="normal" fill="#b0b0b0" textLength="12" lengthAdjust="spacingAndGlyphs" style="white-space:pre">+x</text></svg>
<svg style="left:1057.00px;top:355.10px" width="16.0" height="19.2"><text x="0" y="14.40" font-family="Liberation Serif" font-size="12" font-weight="normal" fill="#b0b0b0" textLength="12" lengthAdjust="spacingAndGlyphs" style="white-space:pre">&#8315;y</text></svg>
<svg style="left:1213.00px;top:247.10px" width="16.0" height="19.2"><text x="0" y="14.40" font-family="Liberation Serif" font-size="12" font-weight="normal" fill="#b0b0b0" textLength="12" lengthAdjust="spacingAndGlyphs" style="white-space:pre">+z</text></svg>
<svg style="left:1213.00px;top:405.10px" width="16.0" height="19.2"><text x="0" y="14.40" font-family="Liberation Serif" font-size="12" font-weight="normal" fill="#b0b0b0" textLength="12" lengthAdjust="spacingAndGlyphs" style="white-space:pre">&#8315;z</text></svg>
<svg style="left:932.00px;top:433.84px" width="51.2" height="18.9"><text x="0" y="14.16" font-family="Liberation Mono" font-size="11.8" font-weight="normal" fill="#000" stroke="#000" stroke-width="0.15" textLength="47.2" lengthAdjust="spacingAndGlyphs" style="white-space:pre">Distance</text></svg>
<div class="a" style="left:987px;top:434px;width:235px;height:20px;border:1px solid #e2e3ea;border-top-color:#abadb3;background:#fff"></div>
<svg style="left:990.00px;top:433.84px" width="15.2" height="18.9"><text x="0" y="14.16" font-family="Liberation Mono" font-size="11.8" font-weight="normal" fill="#000" stroke="#000" stroke-width="0.15" textLength="11.2" lengthAdjust="spacingAndGlyphs" style="white-space:pre">11</text></svg>
<svg style="left:1228.00px;top:433.60px" width="11.5" height="19.2"><text x="0" y="14.40" font-family="Liberation Sans" font-size="12" font-weight="normal" fill="#000" textLength="7.5" lengthAdjust="spacingAndGlyphs" style="white-space:pre">A</text></svg>
<div class="a" style="left:921px;top:473px;width:13px;height:13px;border:1px solid #8f8f8f;background:linear-gradient(135deg,#dcdcdc,#fbfbfb)"></div>
<div class="a" style="left:923px;top:475px;width:9px;height:9px;border:1px solid #c5c5c5;background:linear-gradient(135deg,#e6e6e6,#ffffff)"></div>
<svg style="left:938.00px;top:469.34px" width="27.2" height="18.9"><text x="0" y="14.16" font-family="Liberation Mono" font-size="11.8" font-weight="normal" fill="#000" stroke="#000" stroke-width="0.15" textLength="23.2" lengthAdjust="spacingAndGlyphs" style="white-space:pre">Copy</text></svg>
<svg style="left:279.00px;top:562.34px" width="69.2" height="18.9"><text x="0" y="14.16" font-family="Liberation Mono" font-size="11.8" font-weight="normal" fill="#000" stroke="#000" stroke-width="0.15" textLength="65.2" lengthAdjust="spacingAndGlyphs" style="white-space:pre">Job Manager</text></svg>
<svg style="left:595.00px;top:562.34px" width="147.2" height="18.9"><text x="0" y="14.16" font-family="Liberation Mono" font-size="11.8" font-weight="normal" fill="#000" stroke="#000" stroke-width="0.15" textLength="143.2" lengthAdjust="spacingAndGlyphs" style="white-space:pre">sftp log in successfully</text></svg>
<svg style="left:910.00px;top:562.34px" width="117.2" height="18.9"><text x="0" y="14.16" font-family="Liberation Mono" font-size="11.8" font-weight="normal" fill="#000" stroke="#000" stroke-width="0.15" textLength="113.2" lengthAdjust="spacingAndGlyphs" style="white-space:pre">log in successfully</text></svg>
<div class="a" style="left:1227px;top:561px;width:22px;height:22px;border:1.2px solid #6e6e6e;border-radius:3px;background:linear-gradient(#f7f7f7,#ececec 50%,#d8d8d8)"></div>
<svg style="left:1227px;top:561px;" width="22" height="22" viewBox="0 0 22 22"><g transform="translate(11,11)"><polygon points="7.06,-1.43 7.06,1.43 4.87,1.83 4.74,2.15 6.00,3.98 3.98,6.00 2.15,4.74 1.83,4.87 1.43,7.06 -1.43,7.06 -1.83,4.87 -2.15,4.74 -3.98,6.00 -6.00,3.98 -4.74,2.15 -4.87,1.83 -7.06,1.43 -7.06,-1.43 -4.87,-1.83 -4.74,-2.15 -6.00,-3.98 -3.98,-6.00 -2.15,-4.74 -1.83,-4.87 -1.43,-7.06 1.43,-7.06 1.83,-4.87 2.15,-4.74 3.98,-6.00 6.00,-3.98 4.74,-2.15 4.87,-1.83" fill="none" stroke="#3a3a3a" stroke-width="1.1" stroke-linejoin="round"/><circle r="2.6" fill="none" stroke="#3a3a3a" stroke-width="1.1"/></g></svg>
<div class="a" style="left:1251px;top:561px;width:22px;height:22px;border:1.2px solid #aebbc7;border-radius:3px;background:#f3f3f3"></div>
<svg style="left:1251px;top:561px;" width="22" height="22" viewBox="0 0 22 22"><path d="M4 7.5 H6 C9.5 7.5 9.5 14.5 13.5 14.5 H15 M4 14.5 H6 C7.8 14.5 8.5 13 9.2 11.5 M10.8 9.2 C11.5 8 12.3 7.5 13.5 7.5 H15" stroke="#8c8c8c" stroke-width="2.2" fill="none" stroke-dasharray="1.6 1"/><path d="M14.8 5.2 L18.3 7.5 L14.8 9.8 Z M14.8 12.2 L18.3 14.5 L14.8 16.8 Z" fill="#f3f3f3" stroke="#8c8c8c" stroke-width="1.1"/></svg>
<div class="a" style="left:1275px;top:561px;width:22px;height:22px;border:1.2px solid #6e6e6e;border-radius:3px;background:linear-gradient(#f7f7f7,#ececec 50%,#d8d8d8)"></div>
<svg style="left:1275px;top:561px;" width="22" height="22" viewBox="0 0 22 22"><g fill="none" stroke-linejoin="round"><path d="M4.5 12 C4.5 7.5 8.5 6 12 6.2 L14.5 6.4 M17.5 10 C17.5 14.5 13.5 16 10 15.8 L7.5 15.6" stroke="#333" stroke-width="3.2"/><path d="M4.5 12 C4.5 7.5 8.5 6 12 6.2 L14.5 6.4 M17.5 10 C17.5 14.5 13.5 16 10 15.8 L7.5 15.6" stroke="#ececec" stroke-width="1.2"/><path d="M14 3.6 L17.6 6.5 L14 9.2 Z M8 12.8 L4.4 15.5 L8 18.4 Z" fill="#ececec" stroke="#333" stroke-width="1.1"/></g></svg>
<div class="a" style="left:279px;top:588px;width:1019px;height:221px;border:1px solid #8d97a4;background:#cce8cf"></div>
<div class="a" style="left:280px;top:589px;width:1017px;height:25px;background:linear-gradient(#ffffff,#ffffff 40%,#f3f4f6 41%,#eceef1);border-bottom:1px solid #d5d5d5"></div>
<div class="a" style="left:429px;top:589px;width:1px;height:24px;background:#dfe1e4"></div>
<div class="a" style="left:1006px;top:589px;width:1px;height:24px;background:#dfe1e4"></div>
<div class="a" style="left:1106px;top:589px;width:1px;height:24px;background:#dfe1e4"></div>
<div class="a" style="left:1206px;top:589px;width:1px;height:24px;background:#dfe1e4"></div>
<svg style="left:322.00px;top:590.64px" width="70.0" height="20.5"><text x="0" y="15.36" font-family="Liberation Sans" font-size="12.8" font-weight="normal" fill="#000" textLength="66" lengthAdjust="spacingAndGlyphs" style="white-space:pre">Description</text></svg>
<svg style="left:701.00px;top:590.64px" width="38.0" height="20.5"><text x="0" y="15.36" font-family="Liberation Sans" font-size="12.8" font-weight="normal" fill="#000" textLength="34" lengthAdjust="spacingAndGlyphs" style="white-space:pre">Script</text></svg>
<svg style="left:1015.25px;top:590.64px" width="86.5" height="20.5"><text x="0" y="15.36" font-family="Liberation Sans" font-size="12.8" font-weight="normal" fill="#000" textLength="82.5" lengthAdjust="spacingAndGlyphs" style="white-space:pre">Commit Status</text></svg>
<svg style="left:1140.00px;top:590.64px" width="38.0" height="20.5"><text x="0" y="15.36" font-family="Liberation Sans" font-size="12.8" font-weight="normal" fill="#000" textLength="34" lengthAdjust="spacingAndGlyphs" style="white-space:pre">Status</text></svg>
<svg style="left:1235.50px;top:590.64px" width="46.0" height="20.5"><text x="0" y="15.36" font-family="Liberation Sans" font-size="12.8" font-weight="normal" fill="#000" textLength="42" lengthAdjust="spacingAndGlyphs" style="white-space:pre">Actions</text></svg>
<div class="a" style="left:280px;top:791px;width:1017px;height:17px;background:linear-gradient(#e9e9e9,#f4f4f4 40%,#ececec)"></div>
<div class="a" style="left:298px;top:792px;width:783px;height:15px;border:1px solid #a7a7a7;border-radius:2px;background:linear-gradient(#f4f4f4,#e9e9e9 45%,#d6d6d6 55%,#cfcfcf)"></div>
<div class="a" style="left:686px;top:796px;width:1px;height:7px;background:#686868"></div>
<div class="a" style="left:688px;top:796px;width:1px;height:7px;background:#686868"></div>
<div class="a" style="left:690px;top:796px;width:1px;height:7px;background:#686868"></div>
<svg style="left:284px;top:795px;" width="5" height="8" viewBox="0 0 5 8"><path d="M4.5 0 L0.5 4 L4.5 8 Z" fill="#3f3f3f"/></svg>
<svg style="left:1287px;top:795px;" width="5" height="8" viewBox="0 0 5 8"><path d="M0.5 0 L4.5 4 L0.5 8 Z" fill="#3f3f3f"/></svg>
<div class="a" style="left:1300px;top:829px;width:1px;height:1px;background:#b0b0b0"></div>
<div class="a" style="left:1296px;top:833px;width:1px;height:1px;background:#b0b0b0"></div>
<div class="a" style="left:1300px;top:833px;width:1px;height:1px;background:#b0b0b0"></div>
<div class="a" style="left:1292px;top:837px;width:1px;height:1px;background:#b0b0b0"></div>
<div class="a" style="left:1296px;top:837px;width:1px;height:1px;background:#b0b0b0"></div>
<div class="a" style="left:1300px;top:837px;width:1px;height:1px;background:#b0b0b0"></div>
<svg style="left:0px;top:0px;" width="0" height="0" viewBox="0 0 0 0"><defs><linearGradient id="gg" x1="0" y1="0" x2="0" y2="1"><stop offset="0" stop-color="#f7f7f7"/><stop offset="1" stop-color="#d3d3d3"/></linearGradient><linearGradient id="gb" x1="0" y1="0" x2="0" y2="1"><stop offset="0" stop-color="#eef5fc"/><stop offset="1" stop-color="#7fb0e6"/></linearGradient><linearGradient id="gb2" x1="0" y1="0" x2="1" y2="1"><stop offset="0" stop-color="#d6e8fa"/><stop offset="1" stop-color="#6fa5e0"/></linearGradient><linearGradient id="gr" x1="0" y1="0" x2="0" y2="1"><stop offset="0" stop-color="#f49a9a"/><stop offset="1" stop-color="#d94848"/></linearGradient><radialGradient id="gball" cx="0.4" cy="0.35" r="0.6"><stop offset="0" stop-color="#ffffff"/><stop offset="1" stop-color="#7fb2e8"/></radialGradient><linearGradient id="gpress" x1="0" y1="0" x2="0" y2="1"><stop offset="0" stop-color="#c9c9c9"/><stop offset="0.35" stop-color="#dedede"/><stop offset="1" stop-color="#e9e9e9"/></linearGradient></defs></svg>
<svg style="left:23px;top:59px;" width="20" height="22" viewBox="0 0 20 22"><path d="M3.2 0.7 H16.8 L19.4 3.6 H0.6 Z" fill="#f4f4f4" stroke="#363b43" stroke-width="1.3" stroke-linejoin="round"/><rect x="0.65" y="3.6" width="18.7" height="17.7" rx="0.8" fill="#ececec" stroke="#363b43" stroke-width="1.3"/><path d="M4.3 4.4 H15.7 L16.6 7.6 H3.4 Z" fill="#6fb0f2"/><rect x="2.6" y="7.6" width="14.8" height="13.7" fill="#f3f3f3" stroke="#363b43" stroke-width="1.3"/><path d="M2.6 14.4 H17.4" stroke="#363b43" stroke-width="1.3"/><rect x="3.3" y="15" width="13.4" height="5.6" fill="#e2e2e2"/><path d="M8 11 H12.2 M8 18 H12.2" stroke="#6a6a6a" stroke-width="1"/><path d="M2.6 21 H17.4" stroke="#363b43" stroke-width="1.6"/></svg>
<svg style="left:54px;top:59px;" width="20" height="22" viewBox="0 0 20 22"><rect x="0.65" y="0.65" width="18.7" height="20.7" rx="1" fill="#f6f6f6" stroke="#363b43" stroke-width="1.3"/><rect x="4.1" y="0.65" width="11.4" height="8.3" rx="0.8" fill="#f1f1f1" stroke="#363b43" stroke-width="1.3"/><rect x="11.3" y="2.2" width="2.9" height="5" rx="1.1" fill="#1f77d0"/><path d="M12.75 3.2 V6.2" stroke="#cfe6fb" stroke-width="0.7"/><rect x="2.4" y="11.4" width="15.2" height="9.9" rx="0.8" fill="#eeeeee" stroke="#363b43" stroke-width="1.3"/></svg>
<svg style="left:104px;top:59px;" width="18" height="22" viewBox="0 0 18 22"><path d="M1.6 0.65 H11.4 L17.35 6.4 V20.3 Q17.35 21.35 16.3 21.35 H1.7 Q0.65 21.35 0.65 20.3 V1.7 Q0.65 0.65 1.6 0.65 Z" fill="url(#gg)" stroke="#363b43" stroke-width="1.3"/><path d="M11.4 0.65 V5.4 Q11.4 6.4 12.4 6.4 H17.35" fill="#fafafa" stroke="#363b43" stroke-width="1.2"/></svg>
<svg style="left:130.5px;top:67.5px;" width="8" height="5" viewBox="0 0 8 5"><path d="M0 0.5 H7.5 L3.75 4.5 Z" fill="#111"/></svg>
<svg style="left:154px;top:59px;" width="18" height="22" viewBox="0 0 18 22"><path d="M1.6 0.65 H11.4 L17.35 6.4 V20.3 Q17.35 21.35 16.3 21.35 H1.7 Q0.65 21.35 0.65 20.3 V1.7 Q0.65 0.65 1.6 0.65 Z" fill="url(#gg)" stroke="#363b43" stroke-width="1.3"/><path d="M11.4 0.65 V5.4 Q11.4 6.4 12.4 6.4 H17.35" fill="#fafafa" stroke="#363b43" stroke-width="1.2"/></svg>
<svg style="left:152px;top:62px;" width="15" height="17" viewBox="0 0 15 17"><path d="M0.8 15.8 C0.8 10 3 6.5 8.2 5.8 L8.4 2.2 L13.8 6.9 L9 12.5 L8.6 9.6 C4.5 9.6 2 12 0.8 15.8 Z" fill="url(#gb2)" stroke="#2e66a8" stroke-width="1.1" stroke-linejoin="round"/></svg>
<svg style="left:189px;top:61px;" width="20" height="18" viewBox="0 0 20 18"><path d="M0.5 6.4 L6.7 0.5 L7.3 3.4 C13 3.9 19.3 7.5 19.3 16.6 L18.4 17.6 C16.5 12.3 13 9.2 7.3 9.3 L6.7 12.2 Z" fill="url(#gb)" stroke="#2e5f90" stroke-width="1.1" stroke-linejoin="round"/></svg>
<svg style="left:220px;top:61px;" width="20" height="18" viewBox="0 0 20 18"><g transform="translate(20,0) scale(-1,1)"><path d="M0.5 6.4 L6.7 0.5 L7.3 3.4 C13 3.9 19.3 7.5 19.3 16.6 L18.4 17.6 C16.5 12.3 13 9.2 7.3 9.3 L6.7 12.2 Z" fill="url(#gb)" stroke="#2e5f90" stroke-width="1.1" stroke-linejoin="round"/></g></svg>
<div class="a" style="left:258px;top:56px;width:31px;height:28px;border:1.3px solid #4e4e4e;border-radius:4px;background:linear-gradient(#c4c4c4,#dadada 35%,#e4e4e4);box-shadow:inset 1px 1px 1px rgba(0,0,0,0.12)"></div>
<svg style="left:258px;top:56px;" width="31" height="28" viewBox="0 0 31 28"><path d="M10.3 3.6 V21 L13.6 17.7 L16.8 24.8 Q17.3 25.8 18.3 25.3 L19.2 24.8 Q20 24.3 19.6 23.4 L16.7 16.6 H22.5 Z" fill="#ebebeb" stroke="#3a3a3a" stroke-width="1.2" stroke-linejoin="round"/><path d="M17.2 18.3 L18.6 23.8" stroke="#3a3a3a" stroke-width="0.9"/></svg>
<svg style="left:293px;top:59px;" width="22" height="22" viewBox="0 0 22 22"><g fill="none" stroke="#363b43" stroke-width="1.1"><ellipse cx="11" cy="11.3" rx="10.4" ry="4.1"/><path d="M11 0.6 A4 10.4 0 0 1 11 21.4 M11 0.6 A4 10.4 0 0 0 7.4 5.8 M7.4 16.4 A4 10.4 0 0 0 11 21.4"/><path d="M6.4 3.9 L7.4 6 L9.7 5.8 M2.4 6.3 L2.6 8.8 L5 9.4 M19.6 6.3 L19.4 8.8 L17 9.4 M6.3 18.4 L7.4 16.3 L9.7 16.6"/></g><circle cx="11" cy="10.8" r="3.9" fill="url(#gball)" stroke="#3a8ee0" stroke-width="1.3"/></svg>
<svg style="left:324px;top:59px;" width="23" height="23" viewBox="0 0 23 23"><circle cx="9.4" cy="9.3" r="6.7" fill="none" stroke="#f0f0f0" stroke-width="3.2"/><circle cx="9.4" cy="9.3" r="8.2" fill="none" stroke="#363b43" stroke-width="1.2"/><circle cx="9.4" cy="9.3" r="5.1" fill="none" stroke="#363b43" stroke-width="1.2"/><path d="M14.3 15.2 L19.2 20.1 Q20.1 21 21 20.1 Q21.9 19.2 21 18.3 L16.1 13.4" fill="#f0f0f0" stroke="#363b43" stroke-width="1.2"/></svg>
<svg style="left:353px;top:57px;" width="24" height="24" viewBox="0 0 24 24"><path d="M12 1.4 L16.4 6.2 H13.6 V10.8 H17.8 V8 L22.8 12.4 L17.8 16.8 V14 H13.6 V18.6 H16.4 L12 23.4 L7.6 18.6 H10.4 V14 H6.2 V16.8 L1.2 12.4 L6.2 8 V10.8 H10.4 V6.2 H7.6 Z" fill="#e9e9e9" stroke="#363b43" stroke-width="1.2" stroke-linejoin="round"/><circle cx="12" cy="12.4" r="3.4" fill="url(#gball)" stroke="#4a87c8" stroke-width="0.6"/></svg>
<svg style="left:391px;top:59px;" width="24" height="23" viewBox="0 0 24 23"><path d="M4.3 11.8 V21.4 H9.4 V15.8 H14.4 V21.4 H19.6 V11.8" fill="#fcfcfc" stroke="#363b43" stroke-width="1.3"/><path d="M0.9 12 L12 1.1 L23.1 12 Z" fill="url(#gr)" stroke="#3b3030" stroke-width="1" stroke-linejoin="round"/></svg>
<svg style="left:420.5px;top:67.5px;" width="8" height="5" viewBox="0 0 8 5"><path d="M0 0.5 H7.5 L3.75 4.5 Z" fill="#111"/></svg>
<svg style="left:435px;top:59px;" width="22" height="21" viewBox="0 0 22 21"><g><path d="M0.7 0.7 H8.2 L5.9 3 L9.6 6.7 L6.7 9.6 L3 5.9 L0.7 8.2 Z" fill="#eeeeee" stroke="#363b43" stroke-width="1.25" stroke-linejoin="round"/></g><g transform="translate(21.3,0) scale(-1,1)"><path d="M0.7 0.7 H8.2 L5.9 3 L9.6 6.7 L6.7 9.6 L3 5.9 L0.7 8.2 Z" fill="#eeeeee" stroke="#363b43" stroke-width="1.25" stroke-linejoin="round"/></g><g transform="translate(0,20.6) scale(1,-1)"><path d="M0.7 0.7 H8.2 L5.9 3 L9.6 6.7 L6.7 9.6 L3 5.9 L0.7 8.2 Z" fill="#eeeeee" stroke="#363b43" stroke-width="1.25" stroke-linejoin="round"/></g><g transform="translate(21.3,20.6) scale(-1,-1)"><path d="M0.7 0.7 H8.2 L5.9 3 L9.6 6.7 L6.7 9.6 L3 5.9 L0.7 8.2 Z" fill="#eeeeee" stroke="#363b43" stroke-width="1.25" stroke-linejoin="round"/></g></svg>
<svg style="left:466px;top:60px;" width="22" height="22" viewBox="0 0 22 22"><rect x="0.65" y="0.65" width="8.7" height="8.7" fill="#f0f0f0" stroke="#363b43" stroke-width="1.3"/><rect x="12.35" y="0.65" width="8.7" height="8.7" fill="#f0f0f0" stroke="#363b43" stroke-width="1.3"/><rect x="0.65" y="12.35" width="8.7" height="8.7" fill="url(#gb)" stroke="#2d66a8" stroke-width="1.3"/><rect x="12.35" y="12.35" width="8.7" height="8.7" fill="#f0f0f0" stroke="#363b43" stroke-width="1.3"/></svg>
<svg style="left:516px;top:60px;" width="19" height="19" viewBox="0 0 19 19"><path d="M7 0.7 H11.7 V7 H18.3 V11.7 H11.7 V18.3 H7 V11.7 H0.7 V7 H7 Z" fill="#f4f4f4" stroke="#363b43" stroke-width="1.3" stroke-linejoin="round"/></svg>
<svg style="left:545px;top:58px;" width="24" height="24" viewBox="0 0 24 24"><path d="M12.6 12 V4 M12.6 14 L3 21 M12.6 14 L21 21.5" stroke="#363b43" stroke-width="1.1"/><circle cx="13.5" cy="3.5" r="3.2" fill="url(#gg)" stroke="#555" stroke-width="0.9"/><circle cx="3" cy="21" r="2.9" fill="url(#gg)" stroke="#555" stroke-width="0.9"/><circle cx="21" cy="21.5" r="2.9" fill="url(#gg)" stroke="#555" stroke-width="0.9"/><circle cx="12.6" cy="14.3" r="5.3" fill="url(#gb)" stroke="#363b43" stroke-width="1.2"/><path d="M12.6 11.6 V17 M9.9 14.3 H15.3" stroke="#111" stroke-width="1.3"/></svg>
<svg style="left:580px;top:60px;" width="16" height="19" viewBox="0 0 16 19"><path d="M0.7 1.7 Q0.7 0.7 1.7 0.7 H3.5 Q4.5 0.7 4.5 1.7 V7.6 H10.5 V1.7 Q10.5 0.7 11.5 0.7 H13.3 Q14.3 0.7 14.3 1.7 V16.7 Q14.3 17.7 13.3 17.7 H11.5 Q10.5 17.7 10.5 16.7 V11.3 H4.5 V16.7 Q4.5 17.7 3.5 17.7 H1.7 Q0.7 17.7 0.7 16.7 Z" fill="#f7f7f7" stroke="#363b43" stroke-width="1.3" stroke-linejoin="round"/></svg>
<svg style="left:608px;top:60px;" width="22" height="20" viewBox="0 0 22 20"><path d="M13 0.9 L20.6 8.5 L10.6 18.5 L2.2 18.5 Q0.8 18.5 0.8 17.1 L0.8 13.1 Z" fill="url(#gb2)" stroke="#363b43" stroke-width="1.2" stroke-linejoin="round"/><path d="M5.6 8.3 L10.8 13.4 L5.6 18.5 H2.2 Q0.8 18.5 0.8 17.1 V13.1 Z" fill="#f7f7f7" stroke="#363b43" stroke-width="1.1" stroke-linejoin="round"/></svg>
<svg style="left:639px;top:69px;" width="12" height="12" viewBox="0 0 12 12"><circle cx="5.6" cy="6.3" r="5.1" fill="url(#gg)" stroke="#363b43" stroke-width="1.3"/></svg>
<svg style="left:648px;top:59px;" width="12" height="11" viewBox="0 0 12 11"><path d="M1.2 10.2 L2 7.4 L8.6 0.8 Q9.3 0.1 10 0.8 L11.1 1.9 Q11.8 2.6 11.1 3.3 L4.5 9.9 Z" fill="url(#gb2)" stroke="#363b43" stroke-width="1.1" stroke-linejoin="round"/><path d="M8.3 1.6 L10.3 3.6" stroke="#363b43" stroke-width="0.9"/><path d="M1.2 10.2 L2 7.4 L4.5 9.9 Z" fill="#2f6fb8"/></svg>
<svg style="left:675px;top:67px;" width="22" height="16" viewBox="0 0 22 16"><path d="M5 3.5 L19.5 7.3 M3.5 11.5 L19.5 7.3" stroke="#363b43" stroke-width="1.1"/><circle cx="5" cy="3.5" r="2.3" fill="#f4f4f4" stroke="#363b43" stroke-width="1.1"/><circle cx="3.5" cy="11.5" r="2.3" fill="#f4f4f4" stroke="#363b43" stroke-width="1.1"/><circle cx="19.3" cy="7.4" r="3.3" fill="#f4f4f4" stroke="#363b43" stroke-width="1.2"/></svg>
<svg style="left:684px;top:59px;" width="12" height="11" viewBox="0 0 12 11"><path d="M1.2 10.2 L2 7.4 L8.6 0.8 Q9.3 0.1 10 0.8 L11.1 1.9 Q11.8 2.6 11.1 3.3 L4.5 9.9 Z" fill="url(#gb2)" stroke="#363b43" stroke-width="1.1" stroke-linejoin="round"/><path d="M8.3 1.6 L10.3 3.6" stroke="#363b43" stroke-width="0.9"/><path d="M1.2 10.2 L2 7.4 L4.5 9.9 Z" fill="#2f6fb8"/></svg>
<svg style="left:707px;top:59px;" width="23" height="23" viewBox="0 0 23 23"><rect x="0.65" y="13.5" width="8.1" height="8.1" fill="url(#gg)" stroke="#363b43" stroke-width="1.3"/><rect x="13.6" y="0.65" width="8.1" height="8.1" fill="url(#gb)" stroke="#363b43" stroke-width="1.3"/><path d="M10.2 12.2 L12.4 10" stroke="#222" stroke-width="1.1" fill="none"/><path d="M13.2 9.2 L10.2 9.9 L12.5 12.2 Z" fill="#222"/></svg>
<svg style="left:737px;top:59px;" width="24" height="22" viewBox="0 0 24 22"><rect x="1.2" y="1.2" width="4.6" height="19.4" rx="0.6" fill="url(#gg)" stroke="#363b43" stroke-width="1.2"/><path d="M9.6 19.6 L20.6 8.6" stroke="#363b43" stroke-width="6.6" stroke-linecap="round"/><path d="M9.6 19.6 L20.6 8.6" stroke="#a9cdf2" stroke-width="4.2" stroke-linecap="round"/><path d="M10.3 19.9 L20.9 9.3" stroke="#6fa5e0" stroke-width="1.6" stroke-linecap="round"/><path d="M9 2.3 H11 M12 2.3 L14.3 4.6 M11.6 5 H14.5 V2.2" stroke="#2a6fbf" stroke-width="1.1" fill="none"/></svg>
<svg style="left:770px;top:59px;" width="21" height="23" viewBox="0 0 21 23"><path d="M9.5 0.2 V22.4" stroke="#222" stroke-width="1.2"/><path d="M7 2.6 L0.8 18.6 Q0.6 19.6 1.6 19.6 H7.6 V3.2 Z" fill="url(#gg)" stroke="#363b43" stroke-width="1.1" stroke-linejoin="round"/><path d="M11.6 2.6 L17.8 18.6 Q18 19.6 17 19.6 H11.2 V3.2 Z" fill="url(#gb)" stroke="#363b43" stroke-width="1.1" stroke-linejoin="round"/></svg>
<svg style="left:799px;top:60px;" width="26" height="21" viewBox="0 0 26 21"><path d="M6.5 4 H9 M6.5 17.5 H9 M4.8 6.5 V15" stroke="#363b43" stroke-width="1.1"/><rect x="1.2" y="1.4" width="5.4" height="5" rx="1" fill="#f6f6f6" stroke="#363b43" stroke-width="1.2"/><rect x="8.9" y="1.4" width="5.2" height="5" rx="1" fill="#f6f6f6" stroke="#363b43" stroke-width="1.2"/><rect x="1.2" y="14.9" width="5.4" height="5" rx="1" fill="#f6f6f6" stroke="#363b43" stroke-width="1.2"/><rect x="8.9" y="14.9" width="5.2" height="5" rx="1" fill="#f6f6f6" stroke="#363b43" stroke-width="1.2"/><path d="M13 8.6 H17.4 V5.4 L23.4 10.6 L17.4 15.6 V12.4 H13 Z" fill="url(#gb)" stroke="#363b43" stroke-width="1.1" stroke-linejoin="round"/></svg>
<svg style="left:829px;top:58px;" width="26" height="24" viewBox="0 0 26 24"><text x="9.5" y="9.5" font-family="Liberation Sans" font-style="italic" font-size="10.5" fill="#222">A</text><text x="1.2" y="22" font-family="Liberation Sans" font-style="italic" font-size="10.5" fill="#222">B</text><text x="15.5" y="22" font-family="Liberation Sans" font-style="italic" font-size="10.5" fill="#222">C</text><path d="M6 12.5 V10 M4.8 10.8 L6 9.2 L7.3 10.4 M18 7.5 C19.5 8.5 20.8 9.8 21 11.6 M19.2 11 L21 12.4 L22.3 10.8 M14 19.7 H10 M11 18.5 L9.6 19.7 L11 20.9" stroke="#2a70c0" stroke-width="1.2" fill="none"/></svg>
<svg style="left:861px;top:57px;" width="26" height="25" viewBox="0 0 26 25"><text x="9.5" y="10.5" font-family="Liberation Sans" font-style="italic" font-size="11.5" fill="#222">x</text><text x="0.5" y="22" font-family="Liberation Sans" font-style="italic" font-size="11.5" fill="#222">y</text><text x="15.5" y="22.5" font-family="Liberation Sans" font-style="italic" font-size="11.5" fill="#222">z</text><path d="M7.5 13.5 V11 M6.3 11.8 L7.5 10.2 L8.8 11.4 M18.3 8.5 C19.8 9.5 21.1 10.8 21.3 12.6 M19.5 12 L21.3 13.4 L22.6 11.8 M14 20.5 H10.5 M11.5 19.3 L10.1 20.5 L11.5 21.7" stroke="#2a70c0" stroke-width="1.2" fill="none"/></svg>
<svg style="left:900px;top:60px;" width="20" height="20" viewBox="0 0 20 20"><path d="M0.7 4.5 V0.7 H4.5 M7.5 0.7 H11.5 M14.5 0.7 H18.3 V4.5 M18.3 7.5 V11.5 M18.3 14.5 V18.3 H14.5 M11.5 18.3 H7.5 M4.5 18.3 H0.7 V14.5 M0.7 11.5 V7.5" stroke="#363b43" stroke-width="1.3" fill="none"/><circle cx="6.8" cy="5" r="2.6" fill="none" stroke="#363b43" stroke-width="1"/><circle cx="14" cy="7.1" r="2.6" fill="none" stroke="#363b43" stroke-width="1"/><circle cx="9.2" cy="13.4" r="3.5" fill="none" stroke="#363b43" stroke-width="1"/></svg>
<svg style="left:927.5px;top:67.5px;" width="8" height="5" viewBox="0 0 8 5"><path d="M0 0.5 H7.5 L3.75 4.5 Z" fill="#111"/></svg>
<svg style="left:943px;top:60px;" width="20" height="20" viewBox="0 0 20 20"><path d="M0.7 4.5 V0.7 H4.5 M7.5 0.7 H11.5 M14.5 0.7 H18.3 V4.5 M18.3 7.5 V11.5 M18.3 14.5 V18.3 H14.5 M11.5 18.3 H7.5 M4.5 18.3 H0.7 V14.5 M0.7 11.5 V7.5" stroke="#363b43" stroke-width="1.3" fill="none"/><rect x="3.6" y="3.6" width="12" height="2.3" rx="1.1" fill="#f6f6f6" stroke="#363b43" stroke-width="1"/><rect x="4.3" y="8.6" width="10.5" height="2.3" rx="1.1" fill="#f6f6f6" stroke="#363b43" stroke-width="1"/><rect x="3.6" y="13.8" width="12" height="2.3" rx="1.1" fill="#f6f6f6" stroke="#363b43" stroke-width="1"/></svg>
<svg style="left:970.5px;top:67.5px;" width="8" height="5" viewBox="0 0 8 5"><path d="M0 0.5 H7.5 L3.75 4.5 Z" fill="#111"/></svg>
<svg style="left:986px;top:60px;" width="21" height="21" viewBox="0 0 21 21"><rect x="2.5" y="2.5" width="15.5" height="15.5" fill="none" stroke="#363b43" stroke-width="1.2"/><rect x="5.5" y="5.5" width="9.5" height="9.5" fill="#ececec" stroke="#999" stroke-width="0.9"/><rect x="0.6" y="0.6" width="4" height="4" rx="0.8" fill="#f6f6f6" stroke="#363b43" stroke-width="1.1"/><rect x="15.8" y="0.6" width="4" height="4" rx="0.8" fill="#f6f6f6" stroke="#363b43" stroke-width="1.1"/><rect x="0.6" y="15.8" width="4" height="4" rx="0.8" fill="#f6f6f6" stroke="#363b43" stroke-width="1.1"/><rect x="15.8" y="15.8" width="4" height="4" rx="0.8" fill="#f6f6f6" stroke="#363b43" stroke-width="1.1"/></svg>
<svg style="left:1013.5px;top:67.5px;" width="8" height="5" viewBox="0 0 8 5"><path d="M0 0.5 H7.5 L3.75 4.5 Z" fill="#111"/></svg>
<svg style="left:1039px;top:59px;" width="24" height="23" viewBox="0 0 24 23"><path d="M5.6 16 L10.8 3.5 L19.8 8.3 L19 18 L5.6 16" stroke="#363b43" stroke-width="1.1" fill="none"/><circle cx="10.8" cy="3.4" r="2.7" fill="url(#gg)" stroke="#363b43" stroke-width="1"/><circle cx="19.8" cy="8.2" r="2.6" fill="url(#gg)" stroke="#363b43" stroke-width="1"/><circle cx="19" cy="18.1" r="3.6" fill="url(#gg)" stroke="#363b43" stroke-width="1.1"/><circle cx="5.6" cy="16.2" r="5" fill="url(#gg)" stroke="#363b43" stroke-width="1.1"/></svg>
<svg style="left:1070px;top:59px;" width="24" height="22" viewBox="0 0 24 22"><path d="M7 2.6 H20.6 V18" stroke="#8a8a8a" stroke-width="1" fill="none"/><rect x="4.3" y="0.8" width="4.6" height="4.6" rx="0.9" fill="#f6f6f6" stroke="#8a8a8a" stroke-width="0.9"/><rect x="17.6" y="0.8" width="4.6" height="4.6" rx="0.9" fill="#f6f6f6" stroke="#8a8a8a" stroke-width="0.9"/><rect x="17.6" y="15.6" width="4.6" height="4.6" rx="0.9" fill="#f6f6f6" stroke="#8a8a8a" stroke-width="0.9"/><rect x="3.3" y="6.5" width="12.5" height="11.8" fill="none" stroke="#363b43" stroke-width="1.1"/><rect x="1.1" y="4.2" width="4.6" height="4.6" rx="0.9" fill="#f6f6f6" stroke="#363b43" stroke-width="1.2"/><rect x="13.2" y="4.2" width="4.6" height="4.6" rx="0.9" fill="#f6f6f6" stroke="#363b43" stroke-width="1.2"/><rect x="1.1" y="15.6" width="4.6" height="4.6" rx="0.9" fill="#f6f6f6" stroke="#363b43" stroke-width="1.2"/><rect x="13.2" y="15.6" width="4.6" height="4.6" rx="0.9" fill="#f6f6f6" stroke="#363b43" stroke-width="1.2"/></svg>
<svg style="left:1101px;top:59px;" width="24" height="22" viewBox="0 0 24 22"><path d="M3.5 4 V18 M6.8 4 V18 M16.8 4 V18 M20 4 V18" stroke="#363b43" stroke-width="1.2"/><rect x="3.6" y="5" width="3.2" height="12" fill="#e4e4e4"/><rect x="16.9" y="5" width="3.1" height="12" fill="#e4e4e4"/><path d="M9 2.6 H14.5 M9 18.4 H14.5" stroke="#363b43" stroke-width="1.1"/><rect x="0.9" y="0.6" width="4.6" height="4.6" rx="0.9" fill="#f6f6f6" stroke="#363b43" stroke-width="1.2"/><rect x="5.3" y="0.6" width="4.6" height="4.6" rx="0.9" fill="#f6f6f6" stroke="#363b43" stroke-width="1.2"/><rect x="13.6" y="0.6" width="4.6" height="4.6" rx="0.9" fill="#f6f6f6" stroke="#363b43" stroke-width="1.2"/><rect x="18" y="0.6" width="4.6" height="4.6" rx="0.9" fill="#f6f6f6" stroke="#363b43" stroke-width="1.2"/><rect x="0.9" y="16" width="4.6" height="4.6" rx="0.9" fill="#f6f6f6" stroke="#363b43" stroke-width="1.2"/><rect x="5.3" y="16" width="4.6" height="4.6" rx="0.9" fill="#f6f6f6" stroke="#363b43" stroke-width="1.2"/><rect x="13.6" y="16" width="4.6" height="4.6" rx="0.9" fill="#f6f6f6" stroke="#363b43" stroke-width="1.2"/><rect x="18" y="16" width="4.6" height="4.6" rx="0.9" fill="#f6f6f6" stroke="#363b43" stroke-width="1.2"/></svg>
<svg style="left:1144px;top:61px;" width="23" height="19" viewBox="0 0 23 19"><path d="M2.2 1.2 V10.6 M21.5 1.2 V10.6" stroke="#363b43" stroke-width="1.3"/><path d="M2.6 4.6 H21 M5.3 2.6 L3 4.6 L5.3 6.6 M18.3 2.6 L20.6 4.6 L18.3 6.6" stroke="#2a66a8" stroke-width="1.2" fill="none"/><path d="M7.7 15.3 H15.5" stroke="#8a8a8a" stroke-width="1.1"/><circle cx="5" cy="15.2" r="2.6" fill="#f6f6f6" stroke="#363b43" stroke-width="1.1"/><circle cx="19" cy="15.2" r="2.6" fill="#f6f6f6" stroke="#363b43" stroke-width="1.1"/></svg>
<svg style="left:1177px;top:60px;" width="22" height="20" viewBox="0 0 22 20"><path d="M3.7 8.8 L10 16 L16.4 8.8" stroke="#363b43" stroke-width="1.2" fill="none"/><circle cx="3.7" cy="8.8" r="2.5" fill="#f6f6f6" stroke="#363b43" stroke-width="1.1"/><circle cx="16.4" cy="8.8" r="2.5" fill="#f6f6f6" stroke="#363b43" stroke-width="1.1"/><circle cx="10" cy="16" r="2.5" fill="#f6f6f6" stroke="#363b43" stroke-width="1.1"/><path d="M6 3.6 C8 1.5 11 1.2 13 2.2 M11.5 0.8 L13.6 2.5 L11.6 4.3" stroke="#2a66a8" stroke-width="1.2" fill="none"/></svg>
<svg style="left:1207px;top:59px;" width="22" height="22" viewBox="0 0 22 22"><path d="M4 7 L10 11 L4 15 M10 11 H17" stroke="#8e8e8e" stroke-width="1" fill="none"/><circle cx="4" cy="6.8" r="2.6" fill="#f2f2f2" stroke="#8e8e8e" stroke-width="1"/><circle cx="18" cy="6.8" r="2.6" fill="#f2f2f2" stroke="#8e8e8e" stroke-width="1"/><circle cx="4" cy="15.8" r="2.6" fill="#f2f2f2" stroke="#8e8e8e" stroke-width="1"/><circle cx="18" cy="15.8" r="2.6" fill="#f2f2f2" stroke="#8e8e8e" stroke-width="1"/><path d="M12 2 C15 5 14.5 15 11 19.5" stroke="#b4b4b4" stroke-width="2" fill="none"/><path d="M10 2.5 L13.5 0.8 L13.8 4.5 Z" fill="#b4b4b4"/></svg>
<svg style="left:1239px;top:59px;" width="22" height="22" viewBox="0 0 22 22"><path d="M1 5.4 H19.8 M16.5 2.6 L19.8 5.4 L16.5 8.2" stroke="#2a5f9a" stroke-width="1.3" fill="none"/><text x="0" y="18.4" font-family="Liberation Sans" font-style="italic" font-size="17" fill="#222" textLength="20" lengthAdjust="spacingAndGlyphs">ab</text></svg>
<svg style="left:1268px;top:58px;" width="24" height="24" viewBox="0 0 24 24"><path d="M6.5 6.3 L17.5 17.3" stroke="#363b43" stroke-width="3.6"/><path d="M6.5 6.3 L17.5 17.3" stroke="#e2e2e2" stroke-width="1.6"/><path d="M11.5 11.3 L15 14.8" stroke="#6aa0dc" stroke-width="1.8"/><circle cx="6.5" cy="6.3" r="4.2" fill="url(#gg)" stroke="#363b43" stroke-width="1.2"/><circle cx="17.5" cy="17.3" r="4.2" fill="url(#gb)" stroke="#363b43" stroke-width="1.2"/></svg>
<div class="a" style="left:406px;top:249px;width:104px;height:132px;border:3px solid #fd3a3a"></div>
<div class="a" style="left:700px;top:51px;width:34px;height:35px;border:3px solid #fd3a3a"></div>
<div class="a" style="left:925px;top:422px;width:86px;height:33px;border:3px solid #fd3a3a"></div>
<div class="a" style="left:1192px;top:238px;width:55px;height:70px;border:3px solid #fd3a3a"></div>
<div class="a" style="left:1262px;top:48px;width:43px;height:42px;border:3px solid #fd3a3a"></div>
<svg style="left:0px;top:0px;" width="1315" height="848" viewBox="0 0 1315 848"><polygon points="489.77,246.87 692.74,87.40 692.54,91.65 697.00,81.20 685.81,83.20 690.00,83.96 489.03,245.93" fill="#fd3a3a"/><polygon points="735.62,80.24 944.11,415.57 939.91,414.90 949.80,420.50 949.06,409.16 947.83,413.23 736.38,79.76" fill="#fd3a3a"/><polygon points="1015.81,432.39 1187.08,296.24 1186.91,300.48 1191.30,290.00 1180.13,292.08 1184.32,292.81 1015.19,431.61" fill="#fd3a3a"/><polygon points="1225.87,237.40 1274.62,101.72 1276.72,105.42 1274.90,94.20 1266.52,101.88 1270.46,100.28 1224.73,237.00" fill="#fd3a3a"/></svg>
</body></html>
